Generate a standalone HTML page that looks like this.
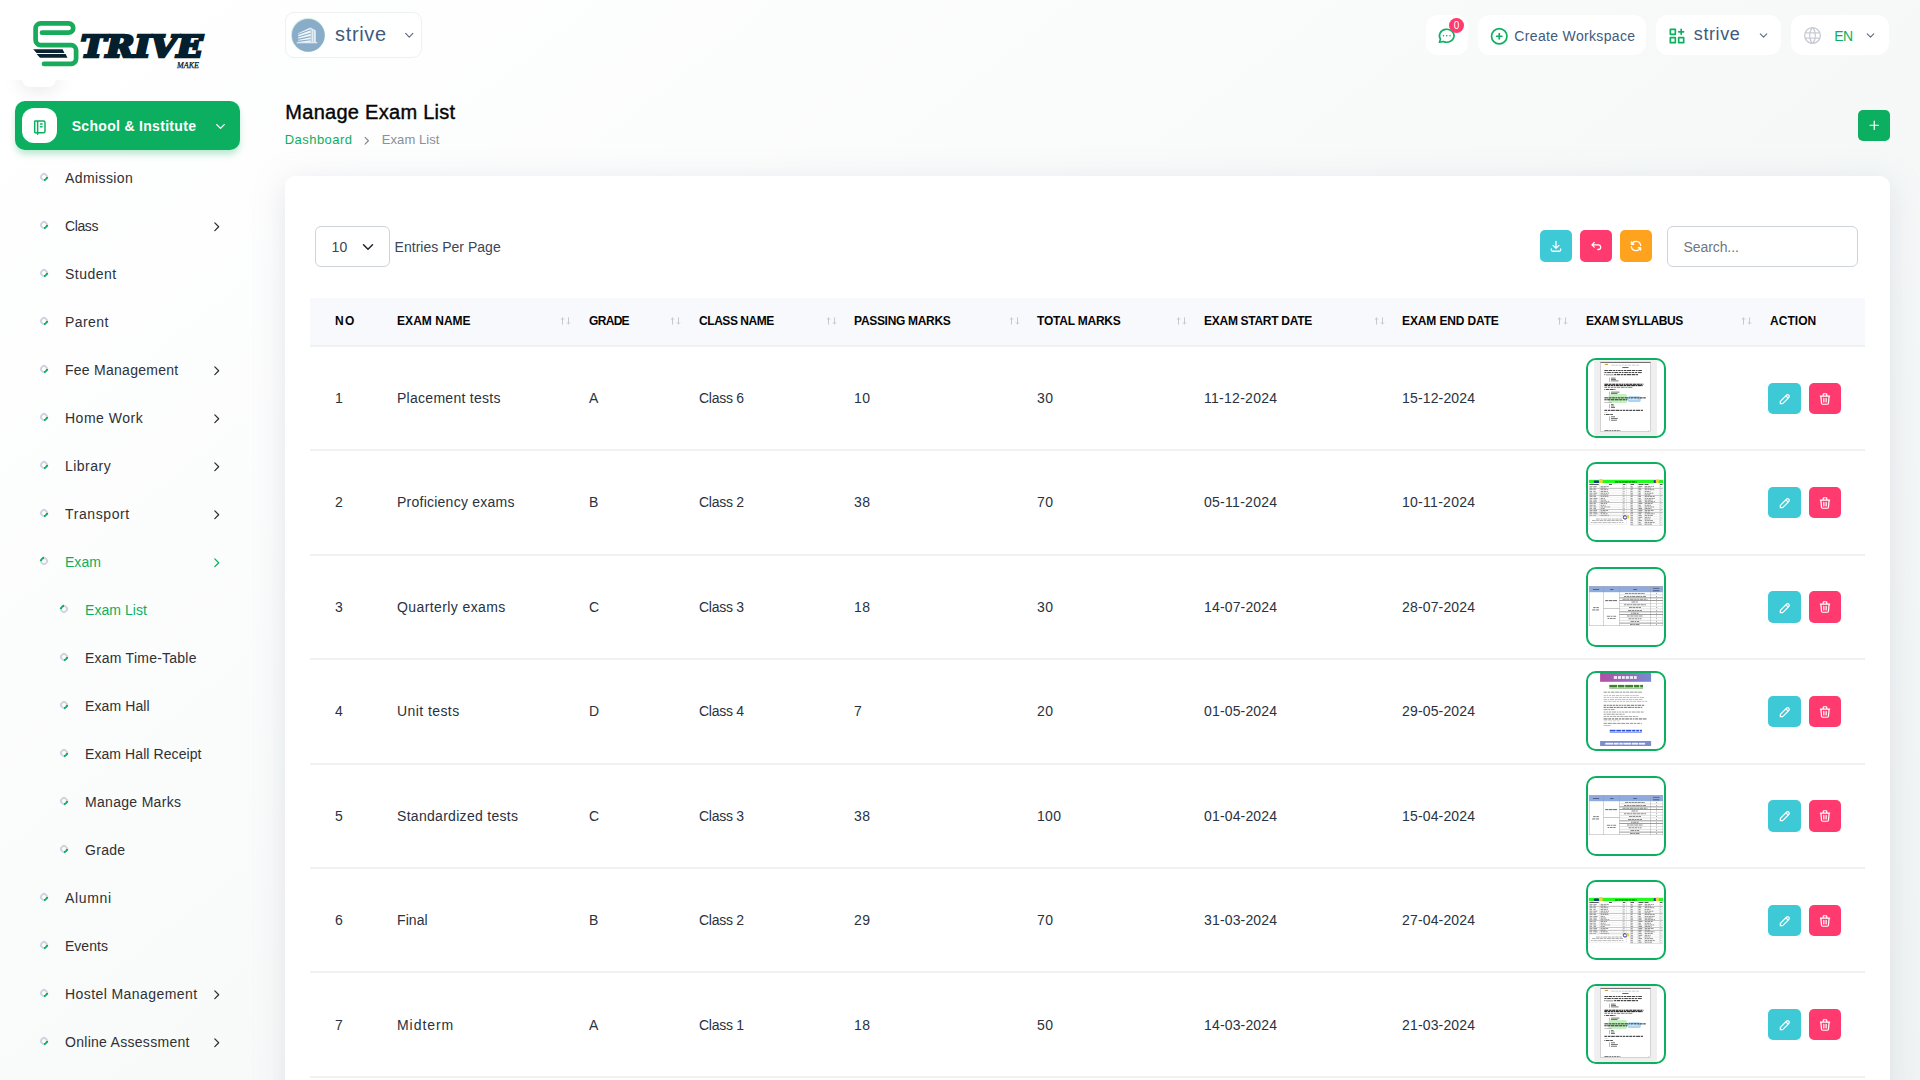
<!DOCTYPE html>
<html lang="en">
<head>
<meta charset="utf-8">
<title>Manage Exam List</title>
<style>
*{box-sizing:border-box;margin:0;padding:0}
html,body{width:1920px;height:1080px;overflow:hidden}
body{font-family:"Liberation Sans",sans-serif;background:linear-gradient(141.55deg,rgba(240,244,243,0) 3.46%,#f0f4f3 99.86%),#fff;color:#293240;position:relative;font-size:14px}
i{font-style:normal}
#sidebar,#top,#content{position:absolute;left:0;top:0;width:0;height:0}
.x{position:absolute;white-space:pre;line-height:20px}
.ic{position:absolute;line-height:0;display:block}
.ic svg{display:block}
#logo{position:absolute;left:0;top:0}
.ghost{position:absolute;left:22px;top:57px;width:34px;height:30.2px;border-radius:8px;background:#fff;box-shadow:0 3px 20px rgba(0,0,0,.1);clip-path:inset(23px -60px -60px -60px)}
#capt{position:absolute;left:15px;top:101px;width:225px;height:49px;border-radius:10px;background:#0caf60;box-shadow:0 5px 7px -1px rgba(12,175,96,.3)}
#capt .ib{position:absolute;left:7px;top:7px;width:35px;height:35px;border-radius:12px;background:#fff}
.b{position:absolute;width:8px;height:8px;border-radius:50%;border:2px solid #cfd4de;border-right-color:#0caf60;transform:rotate(45deg)}
.b.a{border-right-color:#cfd4de;border-left-color:#0caf60}
.pill{position:absolute;background:#fff;border-radius:12px;height:40px;top:15px}
.wpill{position:absolute;left:285px;top:12px;width:136.5px;height:45.5px;border:1px solid #eff0f0;border-radius:9px;background:rgba(255,255,255,.55)}
.av{position:absolute;left:291px;top:17.5px;width:34px;height:34px;line-height:0}
.bdg{position:absolute;width:15px;height:15px;border-radius:50%;background:#ff3a6e;color:#fff;font-size:10px;line-height:15px;text-align:center}
.ttl{color:#060606;-webkit-text-stroke:.4px #060606}
.addb{position:absolute;left:1858px;top:110px;width:32px;height:31px;border-radius:5px;background:#0caf60}
#card{position:absolute;left:285px;top:176px;width:1605px;height:960px;background:#fff;border-radius:10px;box-shadow:0 6px 30px rgba(182,186,203,.34)}
.sel{position:absolute;left:315px;top:226px;width:74.5px;height:40.5px;border:1px solid #ced4da;border-radius:6px;background:#fff}
.tbtn{position:absolute;top:230px;width:32px;height:32px;border-radius:5px}
.srch{position:absolute;left:1667px;top:226px;width:190.5px;height:40.5px;border:1px solid #ced4da;border-radius:6px;background:#fff}
.thead{position:absolute;left:310px;top:298px;width:1555px;height:49px;background:#f8f9fd;border-bottom:2px solid #f1f1f1}
.rb{position:absolute;left:310px;width:1555px;height:2px;background:#f1f1f1}
.thumb{position:absolute;left:1586px;width:80px;height:80px;border:2px solid #0caf60;border-radius:10px;overflow:hidden;background:#fff;line-height:0}
.abtn{position:absolute;height:31.5px;border-radius:5px}

</style>
</head>
<body>
<div id="sidebar">
<svg id="logo" width="260" height="100" viewBox="0 0 260 100">
<path d="M42 32.7H68.6a4.65 4.65 0 0 0 0-9.3H40.7a5.1 5.1 0 0 0-5.1 5.1V40a5.1 5.1 0 0 0 5.1 5.1H71a5.1 5.1 0 0 1 5.1 5.1v8.6a5.1 5.1 0 0 1-5.1 5.1H44" fill="none" stroke="#19ab5c" stroke-width="4.7" stroke-linecap="round" stroke-linejoin="round"/>
<path d="M33.2 49.3H62.6l1.9 3.6H36.6z M36.6 54.1H65.6l1.9 3.6H40z" fill="#0b2233"/>
<text x="80.7" y="57.3" font-family="'DejaVu Serif',serif" font-weight="bold" font-style="italic" font-size="30.4" fill="#04202f" stroke="#04202f" stroke-width="2.7" stroke-linejoin="miter" textLength="122.2" lengthAdjust="spacingAndGlyphs">TRIVE</text>
<text x="177" y="68" font-family="'Liberation Serif',serif" font-style="italic" font-size="8.2" stroke="#04202f" stroke-width=".25" fill="#04202f" textLength="22" lengthAdjust="spacingAndGlyphs">MAKE</text>
</svg>
<div class="ghost"></div>
<div id="capt"><div class="ib"></div></div>
<i class="ic" style="left:30.85px;top:117.75px"><svg width="17.7" height="17.7" viewBox="0 0 24 24" fill="none" stroke="#0caf60" stroke-width="2" stroke-linecap="round" stroke-linejoin="round"><path d="M6 4h11a2 2 0 0 1 2 2v12a2 2 0 0 1 -2 2h-11a1 1 0 0 1 -1 -1v-14a1 1 0 0 1 1 -1m3 0v18 M13 8l2 0 M13 12l2 0"/></svg></i>
<span class="x " style="left:71.70px;top:116.40px;font-size:14px;letter-spacing:0.310px;font-weight:bold;color:#fff;">School &amp; Institute</span>
<i class="ic" style="left:213.10px;top:118.50px"><svg width="15" height="15" viewBox="0 0 24 24" fill="none" stroke="#fff" stroke-width="2.2" stroke-linecap="round" stroke-linejoin="round"><path d="M6 9l6 6l6 -6"/></svg></i>
<i class="b" style="left:40px;top:172.7px"></i>
<span class="x " style="left:65.00px;top:168.15px;font-size:14px;letter-spacing:0.402px;color:#2e3135;">Admission</span>
<i class="b" style="left:40px;top:220.7px"></i>
<span class="x " style="left:65.00px;top:216.15px;font-size:14px;letter-spacing:-0.383px;color:#2e3135;">Class</span>
<i class="ic" style="left:209.25px;top:218.85px"><svg width="15.5" height="15.5" viewBox="0 0 24 24" fill="none" stroke="#2e3135" stroke-width="2" stroke-linecap="round" stroke-linejoin="round"><path d="M9 6l6 6l-6 6"/></svg></i>
<i class="b" style="left:40px;top:268.7px"></i>
<span class="x " style="left:65.00px;top:264.15px;font-size:14px;letter-spacing:0.500px;color:#2e3135;">Student</span>
<i class="b" style="left:40px;top:316.7px"></i>
<span class="x " style="left:65.00px;top:312.15px;font-size:14px;letter-spacing:0.425px;color:#2e3135;">Parent</span>
<i class="b" style="left:40px;top:364.7px"></i>
<span class="x " style="left:65.00px;top:360.15px;font-size:14px;letter-spacing:0.266px;color:#2e3135;">Fee Management</span>
<i class="ic" style="left:209.25px;top:362.85px"><svg width="15.5" height="15.5" viewBox="0 0 24 24" fill="none" stroke="#2e3135" stroke-width="2" stroke-linecap="round" stroke-linejoin="round"><path d="M9 6l6 6l-6 6"/></svg></i>
<i class="b" style="left:40px;top:412.7px"></i>
<span class="x " style="left:65.00px;top:408.15px;font-size:14px;letter-spacing:0.498px;color:#2e3135;">Home Work</span>
<i class="ic" style="left:209.25px;top:410.85px"><svg width="15.5" height="15.5" viewBox="0 0 24 24" fill="none" stroke="#2e3135" stroke-width="2" stroke-linecap="round" stroke-linejoin="round"><path d="M9 6l6 6l-6 6"/></svg></i>
<i class="b" style="left:40px;top:460.7px"></i>
<span class="x " style="left:65.00px;top:456.15px;font-size:14px;letter-spacing:0.477px;color:#2e3135;">Library</span>
<i class="ic" style="left:209.25px;top:458.85px"><svg width="15.5" height="15.5" viewBox="0 0 24 24" fill="none" stroke="#2e3135" stroke-width="2" stroke-linecap="round" stroke-linejoin="round"><path d="M9 6l6 6l-6 6"/></svg></i>
<i class="b" style="left:40px;top:508.7px"></i>
<span class="x " style="left:65.00px;top:504.15px;font-size:14px;letter-spacing:0.598px;color:#2e3135;">Transport</span>
<i class="ic" style="left:209.25px;top:506.85px"><svg width="15.5" height="15.5" viewBox="0 0 24 24" fill="none" stroke="#2e3135" stroke-width="2" stroke-linecap="round" stroke-linejoin="round"><path d="M9 6l6 6l-6 6"/></svg></i>
<i class="b a" style="left:40px;top:557.3px"></i>
<span class="x " style="left:65.00px;top:552.15px;font-size:14px;letter-spacing:0.021px;color:#0caf60;">Exam</span>
<i class="ic" style="left:209.25px;top:554.85px"><svg width="15.5" height="15.5" viewBox="0 0 24 24" fill="none" stroke="#0caf60" stroke-width="2" stroke-linecap="round" stroke-linejoin="round"><path d="M9 6l6 6l-6 6"/></svg></i>
<i class="b a" style="left:60px;top:605.3px"></i>
<span class="x " style="left:85.00px;top:600.15px;font-size:14px;letter-spacing:0.066px;color:#0caf60;">Exam List</span>
<i class="b" style="left:60px;top:652.7px"></i>
<span class="x " style="left:85.00px;top:648.15px;font-size:14px;letter-spacing:0.240px;color:#2e3135;">Exam Time-Table</span>
<i class="b" style="left:60px;top:700.7px"></i>
<span class="x " style="left:85.00px;top:696.15px;font-size:14px;letter-spacing:0.107px;color:#2e3135;">Exam Hall</span>
<i class="b" style="left:60px;top:748.7px"></i>
<span class="x " style="left:85.00px;top:744.15px;font-size:14px;letter-spacing:0.081px;color:#2e3135;">Exam Hall Receipt</span>
<i class="b" style="left:60px;top:796.7px"></i>
<span class="x " style="left:85.00px;top:792.15px;font-size:14px;letter-spacing:0.307px;color:#2e3135;">Manage Marks</span>
<i class="b" style="left:60px;top:844.7px"></i>
<span class="x " style="left:85.00px;top:840.15px;font-size:14px;letter-spacing:0.297px;color:#2e3135;">Grade</span>
<i class="b" style="left:40px;top:892.7px"></i>
<span class="x " style="left:65.00px;top:888.15px;font-size:14px;letter-spacing:0.653px;color:#2e3135;">Alumni</span>
<i class="b" style="left:40px;top:940.7px"></i>
<span class="x " style="left:65.00px;top:936.15px;font-size:14px;letter-spacing:0.016px;color:#2e3135;">Events</span>
<i class="b" style="left:40px;top:988.7px"></i>
<span class="x " style="left:65.00px;top:984.15px;font-size:14px;letter-spacing:0.422px;color:#2e3135;">Hostel Management</span>
<i class="ic" style="left:209.25px;top:986.85px"><svg width="15.5" height="15.5" viewBox="0 0 24 24" fill="none" stroke="#2e3135" stroke-width="2" stroke-linecap="round" stroke-linejoin="round"><path d="M9 6l6 6l-6 6"/></svg></i>
<i class="b" style="left:40px;top:1036.7px"></i>
<span class="x " style="left:65.00px;top:1032.15px;font-size:14px;letter-spacing:0.287px;color:#2e3135;">Online Assessment</span>
<i class="ic" style="left:209.25px;top:1034.85px"><svg width="15.5" height="15.5" viewBox="0 0 24 24" fill="none" stroke="#2e3135" stroke-width="2" stroke-linecap="round" stroke-linejoin="round"><path d="M9 6l6 6l-6 6"/></svg></i>
</div>
<div id="top">
<div class="wpill"></div><div class="av"><svg width="34" height="34" viewBox="0 0 34 34"><circle cx="17" cy="17" r="17" fill="#cfeedd"/><circle cx="17.3" cy="17.3" r="16.4" fill="#89adc9"/>
<path d="M7.2 15.2L19.5 9.6V24.3H7.2z" fill="#fff" opacity=".9"/><path d="M19.5 9.6L24.8 12.6V24.3H19.5z" fill="#e6eef5"/>
<path d="M7 16.6L19.5 11.8M7 19L19.5 15.2M7 21.4L19.5 18.6M7 23.4L19.5 21.8" stroke="#89adc9" stroke-width="1.1"/>
<path d="M20.6 11.5V24M22.6 12.3V24" stroke="#a9c3d8" stroke-width=".7"/><rect x="5.8" y="24" width="20.4" height="1.3" fill="#dfe9f1"/></svg></div>
<span class="x " style="left:335.00px;top:23.77px;font-size:20px;letter-spacing:0.662px;color:#3f5a7d;">strive</span>
<i class="ic" style="left:401.65px;top:28.05px"><svg width="14.5" height="14.5" viewBox="0 0 24 24" fill="none" stroke="#5a6b82" stroke-width="1.9" stroke-linecap="round" stroke-linejoin="round"><path d="M6 9l6 6l6 -6"/></svg></i>
<div class="pill" style="left:1426px;width:42px"></div>
<i class="ic" style="left:1437.45px;top:26.25px"><svg width="19.5" height="19.5" viewBox="0 0 24 24" fill="none" stroke="#0caf60" stroke-width="2" stroke-linecap="round" stroke-linejoin="round"><path d="M3 20l1.3 -3.9a9 8 0 1 1 3.4 2.9l-4.7 1 M12 12l0 .01 M8 12l0 .01 M16 12l0 .01"/></svg></i>
<span class="bdg" style="left:1449px;top:17.8px">0</span>
<div class="pill" style="left:1478px;width:168.2px"></div>
<i class="ic" style="left:1489.15px;top:25.65px"><svg width="20.5" height="20.5" viewBox="0 0 24 24" fill="none" stroke="#0caf60" stroke-width="2" stroke-linecap="round" stroke-linejoin="round"><path d="M3 12a9 9 0 1 0 18 0a9 9 0 0 0 -18 0 M9 12h6 M12 9v6"/></svg></i>
<span class="x " style="left:1514.30px;top:26.15px;font-size:14px;letter-spacing:0.340px;color:#3f5a7d;">Create Workspace</span>
<div class="pill" style="left:1656px;width:125px"></div>
<i class="ic" style="left:1667.30px;top:26.00px"><svg width="20" height="20" viewBox="0 0 24 24" fill="none" stroke="#0caf60" stroke-width="2" stroke-linecap="round" stroke-linejoin="round"><path d="M4 4h6v6h-6z M4 14h6v6h-6z M14 14h6v6h-6z M14 7h6 M17 4v6"/></svg></i>
<span class="x " style="left:1693.80px;top:24.16px;font-size:18px;letter-spacing:0.597px;color:#3f5a7d;">strive</span>
<i class="ic" style="left:1756.60px;top:28.80px"><svg width="13" height="13" viewBox="0 0 24 24" fill="none" stroke="#5a6b82" stroke-width="2" stroke-linecap="round" stroke-linejoin="round"><path d="M6 9l6 6l6 -6"/></svg></i>
<div class="pill" style="left:1791px;width:98.3px"></div>
<i class="ic" style="left:1801.70px;top:25.40px"><svg width="21" height="21" viewBox="0 0 24 24" fill="none" stroke="#c8cbd4" stroke-width="1.5" stroke-linecap="round" stroke-linejoin="round"><path d="M3 12a9 9 0 1 0 18 0a9 9 0 0 0 -18 0 M3.6 9h16.8 M3.6 15h16.8 M11.5 3a17 17 0 0 0 0 18 M12.5 3a17 17 0 0 1 0 18"/></svg></i>
<span class="x " style="left:1834.30px;top:25.55px;font-size:14px;letter-spacing:-0.525px;color:#0caf60;">EN</span>
<i class="ic" style="left:1864.40px;top:28.80px"><svg width="13" height="13" viewBox="0 0 24 24" fill="none" stroke="#5a6b82" stroke-width="2" stroke-linecap="round" stroke-linejoin="round"><path d="M6 9l6 6l6 -6"/></svg></i>
<span class="x ttl" style="left:285.30px;top:101.87px;font-size:20px;letter-spacing:0.279px;">Manage Exam List</span>
<span class="x " style="left:284.80px;top:129.90px;font-size:13px;letter-spacing:0.436px;color:#0caf60;">Dashboard</span>
<i class="ic" style="left:360.15px;top:133.55px"><svg width="13.5" height="13.5" viewBox="0 0 24 24" fill="none" stroke="#7b828c" stroke-width="1.9" stroke-linecap="round" stroke-linejoin="round"><path d="M9 6l6 6l-6 6"/></svg></i>
<span class="x " style="left:381.80px;top:129.90px;font-size:13px;letter-spacing:0.061px;color:#8a909a;">Exam List</span>
<div class="addb"></div>
<i class="ic" style="left:1866.75px;top:118.25px"><svg width="14.5" height="14.5" viewBox="0 0 24 24" fill="none" stroke="#fff" stroke-width="2" stroke-linecap="round" stroke-linejoin="round"><path d="M12 5v14 M5 12h14"/></svg></i>
</div>
<div id="content">
<div id="card"></div>
<div class="sel"></div>
<span class="x " style="left:331.40px;top:237.15px;font-size:14px;letter-spacing:0.438px;color:#3b4656;">10</span>
<i class="ic" style="left:359.20px;top:237.60px"><svg width="18" height="18" viewBox="0 0 24 24" fill="none" stroke="#1d2630" stroke-width="2" stroke-linecap="round" stroke-linejoin="round"><path d="M6 9l6 6l6 -6"/></svg></i>
<span class="x " style="left:394.60px;top:237.15px;font-size:14px;letter-spacing:0.017px;color:#3b4656;">Entries Per Page</span>
<div class="tbtn" style="left:1540px;background:#3ec9d6"></div>
<i class="ic" style="left:1549.00px;top:239.20px"><svg width="14" height="14" viewBox="0 0 24 24" fill="none" stroke="#fff" stroke-width="2.2" stroke-linecap="round" stroke-linejoin="round"><path d="M4 17v2a2 2 0 0 0 2 2h12a2 2 0 0 0 2 -2v-2 M7 11l5 5l5 -5 M12 4v12"/></svg></i>
<div class="tbtn" style="left:1580px;background:#ff3a6e"></div>
<i class="ic" style="left:1589.00px;top:239.20px"><svg width="14" height="14" viewBox="0 0 24 24" fill="none" stroke="#fff" stroke-width="2.2" stroke-linecap="round" stroke-linejoin="round"><path d="M9 14l-4 -4l4 -4 M5 10h11a4 4 0 1 1 0 8h-1"/></svg></i>
<div class="tbtn" style="left:1620px;background:#ffa21d"></div>
<i class="ic" style="left:1629.00px;top:239.20px"><svg width="14" height="14" viewBox="0 0 24 24" fill="none" stroke="#fff" stroke-width="2.2" stroke-linecap="round" stroke-linejoin="round"><path d="M20 11a8.1 8.1 0 0 0 -15.5 -2m-.5 -4v4h4 M4 13a8.1 8.1 0 0 0 15.5 2m.5 4v-4h-4"/></svg></i>
<div class="srch"></div>
<span class="x " style="left:1683.50px;top:237.15px;font-size:14px;letter-spacing:-0.082px;color:#6f7782;">Search...</span>
<div class="thead"></div>
<span class="x " style="left:335.10px;top:310.84px;font-size:12px;letter-spacing:1.312px;font-weight:bold;color:#060606;">NO</span>
<span class="x " style="left:397.10px;top:310.84px;font-size:12px;letter-spacing:0.021px;font-weight:bold;color:#060606;">EXAM NAME</span>
<i class="ic" style="left:560px;top:316.5px"><svg width="11" height="8" viewBox="0 0 11 8" fill="none" stroke="#c6c8cd" stroke-width="1" stroke-linecap="round" stroke-linejoin="round"><path d="M2.5 7.2V1M1.2 2.3L2.5 1L3.8 2.3M8.5 .8V7M7.2 5.7L8.5 7L9.8 5.7"/></svg></i>
<span class="x " style="left:589.10px;top:310.84px;font-size:12px;letter-spacing:-0.711px;font-weight:bold;color:#060606;">GRADE</span>
<i class="ic" style="left:670px;top:316.5px"><svg width="11" height="8" viewBox="0 0 11 8" fill="none" stroke="#c6c8cd" stroke-width="1" stroke-linecap="round" stroke-linejoin="round"><path d="M2.5 7.2V1M1.2 2.3L2.5 1L3.8 2.3M8.5 .8V7M7.2 5.7L8.5 7L9.8 5.7"/></svg></i>
<span class="x " style="left:699.10px;top:310.84px;font-size:12px;letter-spacing:-0.469px;font-weight:bold;color:#060606;">CLASS NAME</span>
<i class="ic" style="left:826px;top:316.5px"><svg width="11" height="8" viewBox="0 0 11 8" fill="none" stroke="#c6c8cd" stroke-width="1" stroke-linecap="round" stroke-linejoin="round"><path d="M2.5 7.2V1M1.2 2.3L2.5 1L3.8 2.3M8.5 .8V7M7.2 5.7L8.5 7L9.8 5.7"/></svg></i>
<span class="x " style="left:854.10px;top:310.84px;font-size:12px;letter-spacing:-0.315px;font-weight:bold;color:#060606;">PASSING MARKS</span>
<i class="ic" style="left:1009px;top:316.5px"><svg width="11" height="8" viewBox="0 0 11 8" fill="none" stroke="#c6c8cd" stroke-width="1" stroke-linecap="round" stroke-linejoin="round"><path d="M2.5 7.2V1M1.2 2.3L2.5 1L3.8 2.3M8.5 .8V7M7.2 5.7L8.5 7L9.8 5.7"/></svg></i>
<span class="x " style="left:1037.10px;top:310.84px;font-size:12px;letter-spacing:-0.228px;font-weight:bold;color:#060606;">TOTAL MARKS</span>
<i class="ic" style="left:1176px;top:316.5px"><svg width="11" height="8" viewBox="0 0 11 8" fill="none" stroke="#c6c8cd" stroke-width="1" stroke-linecap="round" stroke-linejoin="round"><path d="M2.5 7.2V1M1.2 2.3L2.5 1L3.8 2.3M8.5 .8V7M7.2 5.7L8.5 7L9.8 5.7"/></svg></i>
<span class="x " style="left:1204.10px;top:310.84px;font-size:12px;letter-spacing:-0.295px;font-weight:bold;color:#060606;">EXAM START DATE</span>
<i class="ic" style="left:1374px;top:316.5px"><svg width="11" height="8" viewBox="0 0 11 8" fill="none" stroke="#c6c8cd" stroke-width="1" stroke-linecap="round" stroke-linejoin="round"><path d="M2.5 7.2V1M1.2 2.3L2.5 1L3.8 2.3M8.5 .8V7M7.2 5.7L8.5 7L9.8 5.7"/></svg></i>
<span class="x " style="left:1402.10px;top:310.84px;font-size:12px;letter-spacing:-0.142px;font-weight:bold;color:#060606;">EXAM END DATE</span>
<i class="ic" style="left:1557px;top:316.5px"><svg width="11" height="8" viewBox="0 0 11 8" fill="none" stroke="#c6c8cd" stroke-width="1" stroke-linecap="round" stroke-linejoin="round"><path d="M2.5 7.2V1M1.2 2.3L2.5 1L3.8 2.3M8.5 .8V7M7.2 5.7L8.5 7L9.8 5.7"/></svg></i>
<span class="x " style="left:1586.10px;top:310.84px;font-size:12px;letter-spacing:-0.464px;font-weight:bold;color:#060606;">EXAM SYLLABUS</span>
<i class="ic" style="left:1741px;top:316.5px"><svg width="11" height="8" viewBox="0 0 11 8" fill="none" stroke="#c6c8cd" stroke-width="1" stroke-linecap="round" stroke-linejoin="round"><path d="M2.5 7.2V1M1.2 2.3L2.5 1L3.8 2.3M8.5 .8V7M7.2 5.7L8.5 7L9.8 5.7"/></svg></i>
<span class="x " style="left:1770.10px;top:310.84px;font-size:12px;letter-spacing:0.031px;font-weight:bold;color:#060606;">ACTION</span>
<div class="rb" style="top:449.40px"></div>
<span class="x " style="left:335.00px;top:388.15px;font-size:14px;letter-spacing:0.219px;color:#293240;">1</span>
<span class="x " style="left:397.00px;top:388.15px;font-size:14px;letter-spacing:0.280px;color:#293240;">Placement tests</span>
<span class="x " style="left:589.00px;top:388.15px;font-size:14px;letter-spacing:-0.484px;color:#293240;">A</span>
<span class="x " style="left:699.00px;top:388.15px;font-size:14px;letter-spacing:-0.260px;color:#293240;">Class 6</span>
<span class="x " style="left:854.00px;top:388.15px;font-size:14px;letter-spacing:0.438px;color:#293240;">10</span>
<span class="x " style="left:1037.00px;top:388.15px;font-size:14px;letter-spacing:0.438px;color:#293240;">30</span>
<span class="x " style="left:1204.00px;top:388.15px;font-size:14px;letter-spacing:0.276px;color:#293240;">11-12-2024</span>
<span class="x " style="left:1402.00px;top:388.15px;font-size:14px;letter-spacing:0.160px;color:#293240;">15-12-2024</span>
<div class="thumb" style="top:358.00px"><svg width="76" height="76" viewBox="0 0 76 76"><rect x="6.2" y="0" width="62.8" height="76" fill="#efefef"/><rect x="12.6" y="2.1" width="49.9" height="69.4" fill="#fff" stroke="#b0b0b0" stroke-width=".5"/><rect x="12.6" y="2.0" width="49.9" height="0.8" fill="#555"/><rect x="16.8" y="3.9" width="3.2" height="1.1" fill="#e8952c"/><rect x="23.3" y="4.7" width="3.3" height="0.9" fill="#c6c6c6"/><rect x="27.3" y="4.7" width="2.59" height="0.9" fill="#c6c6c6"/><rect x="30.59" y="4.7" width="2.5" height="0.9" fill="#c6c6c6"/><rect x="33.79" y="4.7" width="1.94" height="0.9" fill="#c6c6c6"/><rect x="36.43" y="4.7" width="2.53" height="0.9" fill="#c6c6c6"/><rect x="39.66" y="4.7" width="3.48" height="0.9" fill="#c6c6c6"/><rect x="43.84" y="4.7" width="3.75" height="0.9" fill="#c6c6c6"/><rect x="48.29" y="4.7" width="2.81" height="0.9" fill="#c6c6c6"/><rect x="34.3" y="7" width="6.2" height="0.9" fill="#555"/><rect x="16.4" y="10" width="3.53" height="0.95" fill="#3a3a3a"/><rect x="20.63" y="10" width="3.69" height="0.95" fill="#3a3a3a"/><rect x="25.03" y="10" width="2.07" height="0.95" fill="#3a3a3a"/><rect x="27.8" y="10" width="1.68" height="0.95" fill="#3a3a3a"/><rect x="30.17" y="10" width="2.44" height="0.95" fill="#3a3a3a"/><rect x="33.31" y="10" width="1.78" height="0.95" fill="#3a3a3a"/><rect x="35.8" y="10" width="2.59" height="0.95" fill="#3a3a3a"/><rect x="39.09" y="10" width="4.18" height="0.95" fill="#3a3a3a"/><rect x="43.97" y="10" width="3.02" height="0.95" fill="#3a3a3a"/><rect x="47.69" y="10" width="1.87" height="0.95" fill="#3a3a3a"/><rect x="50.26" y="10" width="3.67" height="0.95" fill="#3a3a3a"/><rect x="16.4" y="12.1" width="2.1" height="0.95" fill="#3a3a3a"/><rect x="19.2" y="12.1" width="3.67" height="0.95" fill="#3a3a3a"/><rect x="23.57" y="12.1" width="2.05" height="0.95" fill="#3a3a3a"/><rect x="26.32" y="12.1" width="3.79" height="0.95" fill="#3a3a3a"/><rect x="30.81" y="12.1" width="2.38" height="0.95" fill="#3a3a3a"/><rect x="33.88" y="12.1" width="1.65" height="0.95" fill="#3a3a3a"/><rect x="36.24" y="12.1" width="3.68" height="0.95" fill="#3a3a3a"/><rect x="40.62" y="12.1" width="2.28" height="0.95" fill="#3a3a3a"/><rect x="43.6" y="12.1" width="2.45" height="0.95" fill="#3a3a3a"/><rect x="46.75" y="12.1" width="2.32" height="0.95" fill="#3a3a3a"/><rect x="49.77" y="12.1" width="3.97" height="0.95" fill="#3a3a3a"/><rect x="16.4" y="14.2" width="0.9" height="0.9" fill="#333"/><rect x="18" y="14.6" width="7.5" height="0.6" fill="#444"/><rect x="26.2" y="14.1" width="1.83" height="1.1" fill="#333"/><rect x="28.73" y="14.1" width="3.53" height="1.1" fill="#333"/><rect x="32.97" y="14.1" width="1.91" height="1.1" fill="#333"/><rect x="35.58" y="14.1" width="2.76" height="1.1" fill="#333"/><rect x="39.04" y="14.1" width="3.9" height="1.1" fill="#333"/><rect x="43.64" y="14.1" width="3.77" height="1.1" fill="#333"/><rect x="48.11" y="14.1" width="1.94" height="1.1" fill="#333"/><rect x="21.3" y="17.6" width="0.45" height="4.2" fill="#666"/><rect x="23" y="17.7" width="4.5" height="0.8" fill="#555"/><rect x="23" y="19.1" width="5" height="0.8" fill="#555"/><rect x="23" y="20.5" width="7.5" height="0.8" fill="#555"/><rect x="16.4" y="23.7" width="4.04" height="1.15" fill="#2b2b2b"/><rect x="20.99" y="23.7" width="2.58" height="1.15" fill="#2b2b2b"/><rect x="24.12" y="23.7" width="3.26" height="1.15" fill="#2b2b2b"/><rect x="27.92" y="23.7" width="2.66" height="1.15" fill="#2b2b2b"/><rect x="31.14" y="23.7" width="1.73" height="1.15" fill="#2b2b2b"/><rect x="33.41" y="23.7" width="1.75" height="1.15" fill="#2b2b2b"/><rect x="35.71" y="23.7" width="1.72" height="1.15" fill="#2b2b2b"/><rect x="37.98" y="23.7" width="2.74" height="1.15" fill="#2b2b2b"/><rect x="41.27" y="23.7" width="2.89" height="1.15" fill="#2b2b2b"/><rect x="44.7" y="23.7" width="3.83" height="1.15" fill="#2b2b2b"/><rect x="49.08" y="23.7" width="2.7" height="1.15" fill="#2b2b2b"/><rect x="52.33" y="23.7" width="1.84" height="1.15" fill="#2b2b2b"/><rect x="54.71" y="23.7" width="0.69" height="1.15" fill="#2b2b2b"/><rect x="16.4" y="25.0" width="2.86" height="1.15" fill="#2b2b2b"/><rect x="19.81" y="25.0" width="2.48" height="1.15" fill="#2b2b2b"/><rect x="22.85" y="25.0" width="2.08" height="1.15" fill="#2b2b2b"/><rect x="25.47" y="25.0" width="1.97" height="1.15" fill="#2b2b2b"/><rect x="27.99" y="25.0" width="2.93" height="1.15" fill="#2b2b2b"/><rect x="31.47" y="25.0" width="3.51" height="1.15" fill="#2b2b2b"/><rect x="35.53" y="25.0" width="2.59" height="1.15" fill="#2b2b2b"/><rect x="38.67" y="25.0" width="3.98" height="1.15" fill="#2b2b2b"/><rect x="43.2" y="25.0" width="3.7" height="1.15" fill="#2b2b2b"/><rect x="47.45" y="25.0" width="2.0" height="1.15" fill="#2b2b2b"/><rect x="50.0" y="25.0" width="3.74" height="1.15" fill="#2b2b2b"/><rect x="54.3" y="25.0" width="0.6" height="1.15" fill="#2b2b2b"/><rect x="16.4" y="26.9" width="2.74" height="0.8" fill="#6a6a6a"/><rect x="19.84" y="26.9" width="2.48" height="0.8" fill="#6a6a6a"/><rect x="23.02" y="26.9" width="2.34" height="0.8" fill="#6a6a6a"/><rect x="26.05" y="26.9" width="2.33" height="0.8" fill="#6a6a6a"/><rect x="29.08" y="26.9" width="3.07" height="0.8" fill="#6a6a6a"/><rect x="32.85" y="26.9" width="3.79" height="0.8" fill="#6a6a6a"/><rect x="37.34" y="26.9" width="2.24" height="0.8" fill="#6a6a6a"/><rect x="40.28" y="26.9" width="4.03" height="0.8" fill="#6a6a6a"/><rect x="16.4" y="29.1" width="0.9" height="0.9" fill="#333"/><rect x="18" y="29.1" width="2.95" height="0.9" fill="#3a3a3a"/><rect x="21.65" y="29.1" width="4.01" height="0.9" fill="#3a3a3a"/><rect x="26.35" y="29.1" width="1.05" height="0.9" fill="#3a3a3a"/><rect x="21.3" y="31.6" width="0.45" height="4.2" fill="#666"/><rect x="23" y="31.7" width="8.5" height="0.8" fill="#555"/><rect x="23" y="33.1" width="6.5" height="0.8" fill="#555"/><rect x="23" y="34.6" width="9" height="0.8" fill="#555"/><rect x="20.5" y="34.1" width="18.5" height="8.8" fill="#c3f0bf" rx="1.6"/><rect x="39.8" y="36.2" width="13" height="5.9" fill="#abd5f5" rx="1.6"/><rect x="16.4" y="37.3" width="3.54" height="1.1" fill="#383838"/><rect x="20.49" y="37.3" width="3.04" height="1.1" fill="#383838"/><rect x="24.09" y="37.3" width="2.7" height="1.1" fill="#383838"/><rect x="27.34" y="37.3" width="1.84" height="1.1" fill="#383838"/><rect x="29.73" y="37.3" width="2.77" height="1.1" fill="#383838"/><rect x="33.05" y="37.3" width="2.81" height="1.1" fill="#383838"/><rect x="36.41" y="37.3" width="3.71" height="1.1" fill="#383838"/><rect x="40.68" y="37.3" width="1.65" height="1.1" fill="#383838"/><rect x="42.87" y="37.3" width="2.14" height="1.1" fill="#383838"/><rect x="45.56" y="37.3" width="3.08" height="1.1" fill="#383838"/><rect x="49.19" y="37.3" width="2.14" height="1.1" fill="#383838"/><rect x="51.89" y="37.3" width="2.76" height="1.1" fill="#383838"/><rect x="55.2" y="37.3" width="2.55" height="1.1" fill="#383838"/><rect x="16.4" y="39.2" width="2.22" height="1.1" fill="#383838"/><rect x="19.17" y="39.2" width="2.88" height="1.1" fill="#383838"/><rect x="22.59" y="39.2" width="3.83" height="1.1" fill="#383838"/><rect x="26.97" y="39.2" width="3.63" height="1.1" fill="#383838"/><rect x="31.15" y="39.2" width="2.88" height="1.1" fill="#383838"/><rect x="34.59" y="39.2" width="2.36" height="1.1" fill="#383838"/><rect x="37.5" y="39.2" width="1.9" height="1.1" fill="#383838"/><rect x="41" y="38.7" width="1.99" height="0.9" fill="#eaf4fc"/><rect x="43.69" y="38.7" width="3.76" height="0.9" fill="#eaf4fc"/><rect x="48.15" y="38.7" width="1.76" height="0.9" fill="#eaf4fc"/><rect x="16.4" y="42.2" width="7.3" height="0.6" fill="#999"/><rect x="21.3" y="44.1" width="0.45" height="4.2" fill="#666"/><rect x="23" y="44.2" width="2.5" height="0.8" fill="#555"/><rect x="23" y="45.6" width="3.4" height="0.8" fill="#555"/><rect x="23" y="47" width="4" height="0.8" fill="#555"/><rect x="16.4" y="49.8" width="2.83" height="1.05" fill="#303030"/><rect x="19.93" y="49.8" width="2.53" height="1.05" fill="#303030"/><rect x="23.16" y="49.8" width="3.66" height="1.05" fill="#303030"/><rect x="27.52" y="49.8" width="3.99" height="1.05" fill="#303030"/><rect x="32.21" y="49.8" width="1.89" height="1.05" fill="#303030"/><rect x="34.81" y="49.8" width="2.3" height="1.05" fill="#303030"/><rect x="37.81" y="49.8" width="2.77" height="1.05" fill="#303030"/><rect x="41.28" y="49.8" width="3.0" height="1.05" fill="#303030"/><rect x="44.99" y="49.8" width="2.43" height="1.05" fill="#303030"/><rect x="48.12" y="49.8" width="4.17" height="1.05" fill="#303030"/><rect x="52.99" y="49.8" width="2.01" height="1.05" fill="#303030"/><rect x="16.4" y="52.1" width="3.3" height="0.45" fill="#b5b5b5"/><rect x="16.4" y="54.1" width="0.9" height="0.9" fill="#333"/><rect x="18" y="54.1" width="3.53" height="0.9" fill="#3a3a3a"/><rect x="22.23" y="54.1" width="2.63" height="0.9" fill="#3a3a3a"/><rect x="21.3" y="56.3" width="0.45" height="4.6" fill="#666"/><rect x="23" y="56.4" width="4" height="0.8" fill="#555"/><rect x="23" y="58.1" width="6.8" height="0.8" fill="#555"/><rect x="23" y="59.8" width="6" height="0.8" fill="#555"/><rect x="16.4" y="70.1" width="4.19" height="0.8" fill="#5a5a5a"/><rect x="21.29" y="70.1" width="1.74" height="0.8" fill="#5a5a5a"/><rect x="23.73" y="70.1" width="1.74" height="0.8" fill="#5a5a5a"/><rect x="26.17" y="70.1" width="1.8" height="0.8" fill="#5a5a5a"/><rect x="28.67" y="70.1" width="2.03" height="0.8" fill="#5a5a5a"/><rect x="31.4" y="70.1" width="0.9" height="0.8" fill="#5a5a5a"/><rect x="60.5" y="70.2" width="0.6" height="0.6" fill="#999"/></svg></div>
<div class="abtn" style="left:1768px;top:382.50px;width:33px;background:#3ec9d6"></div>
<i class="ic" style="left:1777.65px;top:391.80px"><svg width="14" height="14" viewBox="0 0 24 24" fill="none" stroke="#fff" stroke-width="2.1" stroke-linecap="round" stroke-linejoin="round"><path d="M4 20h4l10.5 -10.5a1.5 1.5 0 0 0 -4 -4l-10.5 10.5v4 M13.5 6.5l4 4"/></svg></i>
<div class="abtn" style="left:1809px;top:382.50px;width:32px;background:#ff3a6e"></div>
<i class="ic" style="left:1818.00px;top:391.50px"><svg width="14" height="14" viewBox="0 0 24 24" fill="none" stroke="#fff" stroke-width="2.1" stroke-linecap="round" stroke-linejoin="round"><path d="M4 7l16 0 M10 11l0 6 M14 11l0 6 M5 7l1 12a2 2 0 0 0 2 2h8a2 2 0 0 0 2 -2l1 -12 M9 7v-3a1 1 0 0 1 1 -1h4a1 1 0 0 1 1 1v3"/></svg></i>
<div class="rb" style="top:553.80px"></div>
<span class="x " style="left:335.00px;top:492.15px;font-size:14px;letter-spacing:0.219px;color:#293240;">2</span>
<span class="x " style="left:397.00px;top:492.15px;font-size:14px;letter-spacing:0.242px;color:#293240;">Proficiency exams</span>
<span class="x " style="left:589.00px;top:492.15px;font-size:14px;letter-spacing:-0.297px;color:#293240;">B</span>
<span class="x " style="left:699.00px;top:492.15px;font-size:14px;letter-spacing:-0.260px;color:#293240;">Class 2</span>
<span class="x " style="left:854.00px;top:492.15px;font-size:14px;letter-spacing:0.438px;color:#293240;">38</span>
<span class="x " style="left:1037.00px;top:492.15px;font-size:14px;letter-spacing:0.438px;color:#293240;">70</span>
<span class="x " style="left:1204.00px;top:492.15px;font-size:14px;letter-spacing:0.276px;color:#293240;">05-11-2024</span>
<span class="x " style="left:1402.00px;top:492.15px;font-size:14px;letter-spacing:0.276px;color:#293240;">10-11-2024</span>
<div class="thumb" style="top:462.40px"><svg width="76" height="76" viewBox="0 0 76 76"><rect x="0.9" y="15.8" width="74.2" height="3.3" fill="#21fb21"/><rect x="5.8" y="16.4" width="5.3" height="2.5" fill="#1c2f8f" rx="1"/><rect x="11.1" y="15" width="3.7" height="3.9" fill="#f4d23c" rx="1"/><rect x="65.7" y="15.9" width="2.6" height="3" fill="#2a3c9a" rx="1"/><rect x="67.8" y="15.4" width="3.2" height="3.5" fill="#f4d23c" rx="1"/><rect x="27" y="17.3" width="3.08" height="1.3" fill="#0f7a14"/><rect x="30.58" y="17.3" width="2.27" height="1.3" fill="#0f7a14"/><rect x="33.35" y="17.3" width="2.44" height="1.3" fill="#0f7a14"/><rect x="36.29" y="17.3" width="4.13" height="1.3" fill="#0f7a14"/><rect x="40.92" y="17.3" width="2.41" height="1.3" fill="#0f7a14"/><rect x="43.83" y="17.3" width="3.66" height="1.3" fill="#0f7a14"/><rect x="47.99" y="17.3" width="0.61" height="1.3" fill="#0f7a14"/><rect x="1.2" y="20" width="9.6" height="0.9" fill="#4a4a4a"/><rect x="21" y="20" width="3" height="0.9" fill="#4a4a4a"/><rect x="35" y="20" width="2.4" height="0.9" fill="#4a4a4a"/><rect x="42.5" y="20" width="3.5" height="0.9" fill="#4a4a4a"/><rect x="50.5" y="20" width="5" height="0.9" fill="#4a4a4a"/><rect x="56.5" y="20" width="4" height="0.9" fill="#4a4a4a"/><rect x="72" y="20" width="2.5" height="0.9" fill="#4a4a4a"/><rect x="1" y="23.0" width="74" height="0.3" fill="#dcdcdc"/><rect x="1" y="24.72" width="74" height="0.3" fill="#dcdcdc"/><rect x="1" y="26.44" width="74" height="0.3" fill="#dcdcdc"/><rect x="1" y="28.16" width="74" height="0.3" fill="#dcdcdc"/><rect x="1" y="29.88" width="74" height="0.3" fill="#dcdcdc"/><rect x="1" y="31.6" width="74" height="0.3" fill="#dcdcdc"/><rect x="1" y="33.32" width="74" height="0.3" fill="#dcdcdc"/><rect x="1" y="35.04" width="74" height="0.3" fill="#dcdcdc"/><rect x="1" y="36.76" width="74" height="0.3" fill="#dcdcdc"/><rect x="1" y="38.48" width="74" height="0.3" fill="#dcdcdc"/><rect x="1" y="40.2" width="74" height="0.3" fill="#dcdcdc"/><rect x="1" y="41.92" width="74" height="0.3" fill="#dcdcdc"/><rect x="1" y="43.64" width="74" height="0.3" fill="#dcdcdc"/><rect x="1" y="45.36" width="74" height="0.3" fill="#dcdcdc"/><rect x="1" y="47.08" width="74" height="0.3" fill="#dcdcdc"/><rect x="1" y="48.8" width="74" height="0.3" fill="#dcdcdc"/><rect x="1" y="50.52" width="74" height="0.3" fill="#dcdcdc"/><rect x="1" y="52.24" width="74" height="0.3" fill="#dcdcdc"/><rect x="42" y="53.96" width="33" height="0.3" fill="#dcdcdc"/><rect x="42" y="55.68" width="33" height="0.3" fill="#dcdcdc"/><rect x="42" y="57.4" width="33" height="0.3" fill="#dcdcdc"/><rect x="42" y="59.12" width="33" height="0.3" fill="#dcdcdc"/><rect x="42" y="60.84" width="33" height="0.3" fill="#dcdcdc"/><rect x="1" y="24.3" width="74" height="0.5" fill="#9a9a9a"/><rect x="1" y="31.5" width="74" height="0.5" fill="#9a9a9a"/><rect x="1" y="38.4" width="74" height="0.5" fill="#9a9a9a"/><rect x="1" y="45.3" width="74" height="0.5" fill="#9a9a9a"/><rect x="1" y="48.4" width="74" height="0.5" fill="#9a9a9a"/><rect x="1.6" y="21.95" width="3.0" height="0.7" fill="#777"/><rect x="5.4" y="21.95" width="3.35" height="0.7" fill="#777"/><rect x="12.6" y="21.95" width="2.36" height="0.7" fill="#707070"/><rect x="15.46" y="21.95" width="2.45" height="0.7" fill="#707070"/><rect x="18.41" y="21.95" width="2.37" height="0.7" fill="#707070"/><rect x="35.3" y="21.95" width="1.23" height="0.7" fill="#888"/><rect x="42.6" y="21.95" width="1.97" height="0.7" fill="#777"/><rect x="50.4" y="21.95" width="3.96" height="0.7" fill="#6a6a6a"/><rect x="56.8" y="21.95" width="2.3" height="0.7" fill="#6a6a6a"/><rect x="59.6" y="21.95" width="2.57" height="0.7" fill="#6a6a6a"/><rect x="62.67" y="21.95" width="1.76" height="0.7" fill="#6a6a6a"/><rect x="64.93" y="21.95" width="1.03" height="0.7" fill="#6a6a6a"/><rect x="72.3" y="21.95" width="0.98" height="0.7" fill="#999"/><rect x="1.6" y="23.67" width="2.38" height="0.7" fill="#777"/><rect x="5.4" y="23.67" width="2.26" height="0.7" fill="#777"/><rect x="12.6" y="23.67" width="2.27" height="0.7" fill="#707070"/><rect x="15.37" y="23.67" width="1.59" height="0.7" fill="#707070"/><rect x="17.47" y="23.67" width="1.01" height="0.7" fill="#707070"/><rect x="35.3" y="23.67" width="1.33" height="0.7" fill="#888"/><rect x="42.6" y="23.67" width="2.53" height="0.7" fill="#777"/><rect x="50.4" y="23.67" width="2.38" height="0.7" fill="#6a6a6a"/><rect x="56.8" y="23.67" width="2.19" height="0.7" fill="#6a6a6a"/><rect x="59.49" y="23.67" width="1.58" height="0.7" fill="#6a6a6a"/><rect x="61.58" y="23.67" width="1.38" height="0.7" fill="#6a6a6a"/><rect x="72.3" y="23.67" width="0.99" height="0.7" fill="#999"/><rect x="1.6" y="25.39" width="2.98" height="0.7" fill="#777"/><rect x="5.4" y="25.39" width="2.49" height="0.7" fill="#777"/><rect x="12.6" y="25.39" width="2.47" height="0.7" fill="#707070"/><rect x="15.57" y="25.39" width="2.98" height="0.7" fill="#707070"/><rect x="19.05" y="25.39" width="1.22" height="0.7" fill="#707070"/><rect x="35.3" y="25.39" width="1.14" height="0.7" fill="#888"/><rect x="42.6" y="25.39" width="2.05" height="0.7" fill="#777"/><rect x="50.4" y="25.39" width="2.9" height="0.7" fill="#6a6a6a"/><rect x="56.8" y="25.39" width="2.17" height="0.7" fill="#6a6a6a"/><rect x="59.47" y="25.39" width="1.41" height="0.7" fill="#6a6a6a"/><rect x="61.38" y="25.39" width="2.46" height="0.7" fill="#6a6a6a"/><rect x="64.33" y="25.39" width="1.81" height="0.7" fill="#6a6a6a"/><rect x="72.3" y="25.39" width="1.06" height="0.7" fill="#999"/><rect x="1.6" y="27.11" width="2.44" height="0.7" fill="#777"/><rect x="5.4" y="27.11" width="2.23" height="0.7" fill="#777"/><rect x="12.6" y="27.11" width="2.42" height="0.7" fill="#707070"/><rect x="15.52" y="27.11" width="2.97" height="0.7" fill="#707070"/><rect x="18.99" y="27.11" width="0.84" height="0.7" fill="#707070"/><rect x="35.3" y="27.11" width="1.27" height="0.7" fill="#888"/><rect x="42.6" y="27.11" width="2.03" height="0.7" fill="#777"/><rect x="50.4" y="27.11" width="2.1" height="0.7" fill="#6a6a6a"/><rect x="56.8" y="27.11" width="1.83" height="0.7" fill="#6a6a6a"/><rect x="59.13" y="27.11" width="1.92" height="0.7" fill="#6a6a6a"/><rect x="61.55" y="27.11" width="0.85" height="0.7" fill="#6a6a6a"/><rect x="72.3" y="27.11" width="1.04" height="0.7" fill="#999"/><rect x="1.6" y="28.83" width="2.88" height="0.7" fill="#777"/><rect x="5.4" y="28.83" width="3.83" height="0.7" fill="#777"/><rect x="12.6" y="28.83" width="2.51" height="0.7" fill="#707070"/><rect x="15.61" y="28.83" width="1.61" height="0.7" fill="#707070"/><rect x="17.72" y="28.83" width="1.59" height="0.7" fill="#707070"/><rect x="19.81" y="28.83" width="1.13" height="0.7" fill="#707070"/><rect x="35.3" y="28.83" width="1.19" height="0.7" fill="#888"/><rect x="42.6" y="28.83" width="2.3" height="0.7" fill="#777"/><rect x="50.4" y="28.83" width="2.4" height="0.7" fill="#6a6a6a"/><rect x="56.8" y="28.83" width="1.57" height="0.7" fill="#6a6a6a"/><rect x="58.87" y="28.83" width="1.66" height="0.7" fill="#6a6a6a"/><rect x="61.03" y="28.83" width="1.92" height="0.7" fill="#6a6a6a"/><rect x="63.45" y="28.83" width="1.93" height="0.7" fill="#6a6a6a"/><rect x="72.3" y="28.83" width="0.94" height="0.7" fill="#999"/><rect x="1.6" y="30.55" width="2.75" height="0.7" fill="#777"/><rect x="5.4" y="30.55" width="2.38" height="0.7" fill="#777"/><rect x="12.6" y="30.55" width="2.14" height="0.7" fill="#707070"/><rect x="15.24" y="30.55" width="2.69" height="0.7" fill="#707070"/><rect x="18.43" y="30.55" width="1.67" height="0.7" fill="#707070"/><rect x="35.3" y="30.55" width="1.1" height="0.7" fill="#888"/><rect x="42.6" y="30.55" width="2.24" height="0.7" fill="#777"/><rect x="50.4" y="30.55" width="2.3" height="0.7" fill="#6a6a6a"/><rect x="56.8" y="30.55" width="2.73" height="0.7" fill="#6a6a6a"/><rect x="60.03" y="30.55" width="2.34" height="0.7" fill="#6a6a6a"/><rect x="72.3" y="30.55" width="1.13" height="0.7" fill="#999"/><rect x="1.6" y="32.27" width="2.95" height="0.7" fill="#777"/><rect x="5.4" y="32.27" width="2.63" height="0.7" fill="#777"/><rect x="12.6" y="32.27" width="1.91" height="0.7" fill="#707070"/><rect x="15.01" y="32.27" width="1.46" height="0.7" fill="#707070"/><rect x="16.97" y="32.27" width="1.72" height="0.7" fill="#707070"/><rect x="19.19" y="32.27" width="1.24" height="0.7" fill="#707070"/><rect x="35.3" y="32.27" width="1.16" height="0.7" fill="#888"/><rect x="42.6" y="32.27" width="2.03" height="0.7" fill="#777"/><rect x="50.4" y="32.27" width="2.6" height="0.7" fill="#6a6a6a"/><rect x="56.8" y="32.27" width="2.05" height="0.7" fill="#6a6a6a"/><rect x="59.35" y="32.27" width="2.07" height="0.7" fill="#6a6a6a"/><rect x="61.92" y="32.27" width="2.52" height="0.7" fill="#6a6a6a"/><rect x="64.95" y="32.27" width="1.68" height="0.7" fill="#6a6a6a"/><rect x="72.3" y="32.27" width="1.0" height="0.7" fill="#999"/><rect x="1.6" y="33.99" width="2.85" height="0.7" fill="#777"/><rect x="5.4" y="33.99" width="4.14" height="0.7" fill="#777"/><rect x="12.6" y="33.99" width="2.48" height="0.7" fill="#707070"/><rect x="15.58" y="33.99" width="1.23" height="0.7" fill="#707070"/><rect x="35.3" y="33.99" width="1.33" height="0.7" fill="#888"/><rect x="42.6" y="33.99" width="1.97" height="0.7" fill="#777"/><rect x="50.4" y="33.99" width="2.34" height="0.7" fill="#6a6a6a"/><rect x="56.8" y="33.99" width="1.63" height="0.7" fill="#6a6a6a"/><rect x="58.93" y="33.99" width="1.2" height="0.7" fill="#6a6a6a"/><rect x="60.63" y="33.99" width="2.27" height="0.7" fill="#6a6a6a"/><rect x="63.4" y="33.99" width="2.26" height="0.7" fill="#6a6a6a"/><rect x="66.16" y="33.99" width="0.68" height="0.7" fill="#6a6a6a"/><rect x="72.3" y="33.99" width="1.04" height="0.7" fill="#999"/><rect x="1.6" y="35.71" width="2.58" height="0.7" fill="#777"/><rect x="5.4" y="35.71" width="3.25" height="0.7" fill="#777"/><rect x="12.6" y="35.71" width="2.2" height="0.7" fill="#707070"/><rect x="15.3" y="35.71" width="2.64" height="0.7" fill="#707070"/><rect x="35.3" y="35.71" width="1.3" height="0.7" fill="#888"/><rect x="42.6" y="35.71" width="2.32" height="0.7" fill="#777"/><rect x="50.4" y="35.71" width="3.07" height="0.7" fill="#6a6a6a"/><rect x="56.8" y="35.71" width="2.66" height="0.7" fill="#6a6a6a"/><rect x="59.96" y="35.71" width="2.98" height="0.7" fill="#6a6a6a"/><rect x="63.43" y="35.71" width="1.07" height="0.7" fill="#6a6a6a"/><rect x="72.3" y="35.71" width="1.17" height="0.7" fill="#999"/><rect x="1.6" y="37.43" width="2.76" height="0.7" fill="#777"/><rect x="5.4" y="37.43" width="3.35" height="0.7" fill="#777"/><rect x="12.6" y="37.43" width="2.39" height="0.7" fill="#707070"/><rect x="15.49" y="37.43" width="1.26" height="0.7" fill="#707070"/><rect x="17.25" y="37.43" width="2.14" height="0.7" fill="#707070"/><rect x="19.89" y="37.43" width="1.42" height="0.7" fill="#707070"/><rect x="35.3" y="37.43" width="1.14" height="0.7" fill="#888"/><rect x="42.6" y="37.43" width="2.31" height="0.7" fill="#777"/><rect x="50.4" y="37.43" width="3.1" height="0.7" fill="#6a6a6a"/><rect x="56.8" y="37.43" width="2.68" height="0.7" fill="#6a6a6a"/><rect x="59.98" y="37.43" width="1.82" height="0.7" fill="#6a6a6a"/><rect x="62.29" y="37.43" width="2.96" height="0.7" fill="#6a6a6a"/><rect x="65.75" y="37.43" width="1.29" height="0.7" fill="#6a6a6a"/><rect x="72.3" y="37.43" width="0.98" height="0.7" fill="#999"/><rect x="1.6" y="39.15" width="2.96" height="0.7" fill="#777"/><rect x="5.4" y="39.15" width="2.4" height="0.7" fill="#777"/><rect x="12.6" y="39.15" width="2.48" height="0.7" fill="#707070"/><rect x="15.58" y="39.15" width="1.45" height="0.7" fill="#707070"/><rect x="17.53" y="39.15" width="1.55" height="0.7" fill="#707070"/><rect x="35.3" y="39.15" width="1.11" height="0.7" fill="#888"/><rect x="42.6" y="39.15" width="2.02" height="0.7" fill="#777"/><rect x="50.4" y="39.15" width="3.92" height="0.7" fill="#6a6a6a"/><rect x="56.8" y="39.15" width="2.12" height="0.7" fill="#6a6a6a"/><rect x="59.42" y="39.15" width="2.59" height="0.7" fill="#6a6a6a"/><rect x="62.51" y="39.15" width="2.09" height="0.7" fill="#6a6a6a"/><rect x="72.3" y="39.15" width="1.09" height="0.7" fill="#999"/><rect x="1.6" y="40.87" width="3.0" height="0.7" fill="#777"/><rect x="5.4" y="40.87" width="2.25" height="0.7" fill="#777"/><rect x="12.6" y="40.87" width="1.71" height="0.7" fill="#707070"/><rect x="14.81" y="40.87" width="1.45" height="0.7" fill="#707070"/><rect x="16.76" y="40.87" width="0.77" height="0.7" fill="#707070"/><rect x="35.3" y="40.87" width="1.32" height="0.7" fill="#888"/><rect x="42.6" y="40.87" width="2.22" height="0.7" fill="#777"/><rect x="50.4" y="40.87" width="2.35" height="0.7" fill="#6a6a6a"/><rect x="56.8" y="40.87" width="1.26" height="0.7" fill="#6a6a6a"/><rect x="58.56" y="40.87" width="2.91" height="0.7" fill="#6a6a6a"/><rect x="61.98" y="40.87" width="0.98" height="0.7" fill="#6a6a6a"/><rect x="72.3" y="40.87" width="1.18" height="0.7" fill="#999"/><rect x="1.6" y="42.59" width="2.7" height="0.7" fill="#777"/><rect x="5.4" y="42.59" width="2.81" height="0.7" fill="#777"/><rect x="12.6" y="42.59" width="2.42" height="0.7" fill="#707070"/><rect x="15.52" y="42.59" width="2.33" height="0.7" fill="#707070"/><rect x="18.35" y="42.59" width="1.35" height="0.7" fill="#707070"/><rect x="20.21" y="42.59" width="1.77" height="0.7" fill="#707070"/><rect x="35.3" y="42.59" width="1.08" height="0.7" fill="#888"/><rect x="42.6" y="42.59" width="2.07" height="0.7" fill="#777"/><rect x="50.4" y="42.59" width="2.96" height="0.7" fill="#6a6a6a"/><rect x="56.8" y="42.59" width="2.21" height="0.7" fill="#6a6a6a"/><rect x="59.51" y="42.59" width="2.08" height="0.7" fill="#6a6a6a"/><rect x="62.09" y="42.59" width="2.49" height="0.7" fill="#6a6a6a"/><rect x="65.08" y="42.59" width="1.06" height="0.7" fill="#6a6a6a"/><rect x="72.3" y="42.59" width="0.95" height="0.7" fill="#999"/><rect x="1.6" y="44.31" width="2.29" height="0.7" fill="#777"/><rect x="5.4" y="44.31" width="2.67" height="0.7" fill="#777"/><rect x="12.6" y="44.31" width="1.27" height="0.7" fill="#707070"/><rect x="14.37" y="44.31" width="2.42" height="0.7" fill="#707070"/><rect x="35.3" y="44.31" width="1.35" height="0.7" fill="#888"/><rect x="42.6" y="44.31" width="2.46" height="0.7" fill="#777"/><rect x="50.4" y="44.31" width="3.72" height="0.7" fill="#6a6a6a"/><rect x="56.8" y="44.31" width="2.85" height="0.7" fill="#6a6a6a"/><rect x="60.15" y="44.31" width="2.03" height="0.7" fill="#6a6a6a"/><rect x="62.67" y="44.31" width="0.85" height="0.7" fill="#6a6a6a"/><rect x="72.3" y="44.31" width="1.06" height="0.7" fill="#999"/><rect x="1.6" y="46.03" width="2.87" height="0.7" fill="#777"/><rect x="5.4" y="46.03" width="3.72" height="0.7" fill="#777"/><rect x="12.6" y="46.03" width="1.92" height="0.7" fill="#707070"/><rect x="15.02" y="46.03" width="2.58" height="0.7" fill="#707070"/><rect x="18.1" y="46.03" width="2.09" height="0.7" fill="#707070"/><rect x="35.3" y="46.03" width="1.19" height="0.7" fill="#888"/><rect x="42.6" y="46.03" width="2.06" height="0.7" fill="#777"/><rect x="50.4" y="46.03" width="3.9" height="0.7" fill="#6a6a6a"/><rect x="56.8" y="46.03" width="2.61" height="0.7" fill="#6a6a6a"/><rect x="59.91" y="46.03" width="2.37" height="0.7" fill="#6a6a6a"/><rect x="62.78" y="46.03" width="2.73" height="0.7" fill="#6a6a6a"/><rect x="72.3" y="46.03" width="1.17" height="0.7" fill="#999"/><rect x="1.6" y="47.75" width="2.61" height="0.7" fill="#777"/><rect x="5.4" y="47.75" width="3.15" height="0.7" fill="#777"/><rect x="12.6" y="47.75" width="2.88" height="0.7" fill="#707070"/><rect x="15.98" y="47.75" width="1.57" height="0.7" fill="#707070"/><rect x="35.3" y="47.75" width="1.31" height="0.7" fill="#888"/><rect x="42.6" y="47.75" width="2.47" height="0.7" fill="#777"/><rect x="50.4" y="47.75" width="3.41" height="0.7" fill="#6a6a6a"/><rect x="56.8" y="47.75" width="2.29" height="0.7" fill="#6a6a6a"/><rect x="59.59" y="47.75" width="2.29" height="0.7" fill="#6a6a6a"/><rect x="72.3" y="47.75" width="1.11" height="0.7" fill="#999"/><rect x="1.6" y="49.47" width="2.64" height="0.7" fill="#777"/><rect x="5.4" y="49.47" width="4.12" height="0.7" fill="#777"/><rect x="12.6" y="49.47" width="1.67" height="0.7" fill="#707070"/><rect x="14.77" y="49.47" width="2.43" height="0.7" fill="#707070"/><rect x="17.7" y="49.47" width="1.88" height="0.7" fill="#707070"/><rect x="35.3" y="49.47" width="1.09" height="0.7" fill="#888"/><rect x="42.6" y="49.47" width="2.47" height="0.7" fill="#777"/><rect x="50.4" y="49.47" width="2.98" height="0.7" fill="#6a6a6a"/><rect x="56.8" y="49.47" width="1.65" height="0.7" fill="#6a6a6a"/><rect x="58.95" y="49.47" width="2.87" height="0.7" fill="#6a6a6a"/><rect x="62.32" y="49.47" width="2.68" height="0.7" fill="#6a6a6a"/><rect x="65.5" y="49.47" width="1.11" height="0.7" fill="#6a6a6a"/><rect x="72.3" y="49.47" width="1.01" height="0.7" fill="#999"/><rect x="1.6" y="51.19" width="2.78" height="0.7" fill="#777"/><rect x="5.4" y="51.19" width="2.4" height="0.7" fill="#777"/><rect x="12.6" y="51.19" width="2.98" height="0.7" fill="#707070"/><rect x="16.08" y="51.19" width="2.88" height="0.7" fill="#707070"/><rect x="19.46" y="51.19" width="1.53" height="0.7" fill="#707070"/><rect x="35.3" y="51.19" width="1.29" height="0.7" fill="#888"/><rect x="42.6" y="51.19" width="2.31" height="0.7" fill="#777"/><rect x="50.4" y="51.19" width="3.29" height="0.7" fill="#6a6a6a"/><rect x="56.8" y="51.19" width="2.58" height="0.7" fill="#6a6a6a"/><rect x="59.88" y="51.19" width="1.92" height="0.7" fill="#6a6a6a"/><rect x="62.29" y="51.19" width="2.5" height="0.7" fill="#6a6a6a"/><rect x="72.3" y="51.19" width="1.06" height="0.7" fill="#999"/><rect x="42.6" y="52.91" width="2.33" height="0.7" fill="#777"/><rect x="50.4" y="52.91" width="3.8" height="0.7" fill="#6a6a6a"/><rect x="56.8" y="52.91" width="2.28" height="0.7" fill="#6a6a6a"/><rect x="59.58" y="52.91" width="1.75" height="0.7" fill="#6a6a6a"/><rect x="61.83" y="52.91" width="0.84" height="0.7" fill="#6a6a6a"/><rect x="72.3" y="52.91" width="1.19" height="0.7" fill="#999"/><rect x="42.6" y="54.63" width="2.46" height="0.7" fill="#777"/><rect x="50.4" y="54.63" width="2.03" height="0.7" fill="#6a6a6a"/><rect x="56.8" y="54.63" width="2.0" height="0.7" fill="#6a6a6a"/><rect x="59.3" y="54.63" width="1.28" height="0.7" fill="#6a6a6a"/><rect x="61.08" y="54.63" width="1.14" height="0.7" fill="#6a6a6a"/><rect x="72.3" y="54.63" width="1.16" height="0.7" fill="#999"/><rect x="42.6" y="56.35" width="2.48" height="0.7" fill="#777"/><rect x="50.4" y="56.35" width="3.69" height="0.7" fill="#6a6a6a"/><rect x="56.8" y="56.35" width="1.86" height="0.7" fill="#6a6a6a"/><rect x="59.16" y="56.35" width="2.41" height="0.7" fill="#6a6a6a"/><rect x="62.06" y="56.35" width="2.9" height="0.7" fill="#6a6a6a"/><rect x="72.3" y="56.35" width="0.98" height="0.7" fill="#999"/><rect x="42.6" y="58.07" width="2.22" height="0.7" fill="#777"/><rect x="50.4" y="58.07" width="2.23" height="0.7" fill="#6a6a6a"/><rect x="56.8" y="58.07" width="2.18" height="0.7" fill="#6a6a6a"/><rect x="59.48" y="58.07" width="1.49" height="0.7" fill="#6a6a6a"/><rect x="61.48" y="58.07" width="2.71" height="0.7" fill="#6a6a6a"/><rect x="64.69" y="58.07" width="1.96" height="0.7" fill="#6a6a6a"/><rect x="72.3" y="58.07" width="1.07" height="0.7" fill="#999"/><rect x="42.6" y="59.79" width="2.57" height="0.7" fill="#777"/><rect x="50.4" y="59.79" width="3.17" height="0.7" fill="#6a6a6a"/><rect x="56.8" y="59.79" width="2.11" height="0.7" fill="#6a6a6a"/><rect x="59.41" y="59.79" width="1.45" height="0.7" fill="#6a6a6a"/><rect x="61.36" y="59.79" width="2.56" height="0.7" fill="#6a6a6a"/><rect x="72.3" y="59.79" width="1.03" height="0.7" fill="#999"/><rect x="1" y="19.4" width="0.35" height="32.4" fill="#c8c8c8"/><rect x="11.2" y="19.4" width="0.35" height="32.4" fill="#c8c8c8"/><rect x="34.6" y="19.4" width="0.35" height="32.4" fill="#c8c8c8"/><rect x="38.2" y="19.4" width="0.35" height="41.6" fill="#c8c8c8"/><rect x="42" y="19.4" width="0.35" height="41.6" fill="#c8c8c8"/><rect x="49.7" y="19.4" width="0.35" height="41.6" fill="#c8c8c8"/><rect x="55.9" y="19.4" width="0.35" height="41.6" fill="#c8c8c8"/><rect x="71.3" y="19.4" width="0.35" height="41.6" fill="#c8c8c8"/><rect x="74.8" y="19.4" width="0.35" height="41.6" fill="#c8c8c8"/><rect x="1" y="51.6" width="37" height="0.4" fill="#bbb"/><rect x="42" y="61" width="33" height="0.4" fill="#bbb"/><circle cx="37" cy="53.4" r="1.7" fill="#fff" stroke="#27359b" stroke-width="1"/><rect x="38.6" y="51" width="2.6" height="3.6" fill="#f4d23c" rx="1"/><rect x="8" y="54.7" width="3.8" height="0.65" fill="#8a8a8a"/><rect x="12.5" y="54.7" width="2.09" height="0.65" fill="#8a8a8a"/><rect x="15.28" y="54.7" width="3.64" height="0.65" fill="#8a8a8a"/><rect x="19.62" y="54.7" width="3.67" height="0.65" fill="#8a8a8a"/><rect x="23.99" y="54.7" width="2.62" height="0.65" fill="#8a8a8a"/><rect x="27.31" y="54.7" width="3.34" height="0.65" fill="#8a8a8a"/><rect x="31.35" y="54.7" width="2.65" height="0.65" fill="#8a8a8a"/><rect x="4" y="56.3" width="3.61" height="0.65" fill="#8a8a8a"/><rect x="8.31" y="56.3" width="2.55" height="0.65" fill="#8a8a8a"/><rect x="11.56" y="56.3" width="3.78" height="0.65" fill="#8a8a8a"/><rect x="16.04" y="56.3" width="2.0" height="0.65" fill="#8a8a8a"/><rect x="18.74" y="56.3" width="3.92" height="0.65" fill="#8a8a8a"/><rect x="23.36" y="56.3" width="3.36" height="0.65" fill="#8a8a8a"/><rect x="27.42" y="56.3" width="3.39" height="0.65" fill="#8a8a8a"/><rect x="31.51" y="56.3" width="3.49" height="0.65" fill="#8a8a8a"/><rect x="3" y="58.2" width="1.67" height="0.65" fill="#9a9a9a"/><rect x="5.37" y="58.2" width="4.06" height="0.65" fill="#9a9a9a"/><rect x="10.13" y="58.2" width="3.7" height="0.65" fill="#9a9a9a"/><rect x="14.53" y="58.2" width="4.12" height="0.65" fill="#9a9a9a"/><rect x="19.35" y="58.2" width="4.08" height="0.65" fill="#9a9a9a"/><rect x="24.13" y="58.2" width="3.62" height="0.65" fill="#9a9a9a"/><rect x="28.45" y="58.2" width="1.66" height="0.65" fill="#9a9a9a"/><rect x="30.81" y="58.2" width="2.24" height="0.65" fill="#9a9a9a"/><rect x="33.74" y="58.2" width="1.6" height="0.65" fill="#9a9a9a"/><rect x="1" y="59.9" width="36" height="0.35" fill="#ccc"/><rect x="1" y="52" width="0.35" height="8" fill="#ccc"/></svg></div>
<div class="abtn" style="left:1768px;top:486.90px;width:33px;background:#3ec9d6"></div>
<i class="ic" style="left:1777.65px;top:496.20px"><svg width="14" height="14" viewBox="0 0 24 24" fill="none" stroke="#fff" stroke-width="2.1" stroke-linecap="round" stroke-linejoin="round"><path d="M4 20h4l10.5 -10.5a1.5 1.5 0 0 0 -4 -4l-10.5 10.5v4 M13.5 6.5l4 4"/></svg></i>
<div class="abtn" style="left:1809px;top:486.90px;width:32px;background:#ff3a6e"></div>
<i class="ic" style="left:1818.00px;top:495.90px"><svg width="14" height="14" viewBox="0 0 24 24" fill="none" stroke="#fff" stroke-width="2.1" stroke-linecap="round" stroke-linejoin="round"><path d="M4 7l16 0 M10 11l0 6 M14 11l0 6 M5 7l1 12a2 2 0 0 0 2 2h8a2 2 0 0 0 2 -2l1 -12 M9 7v-3a1 1 0 0 1 1 -1h4a1 1 0 0 1 1 1v3"/></svg></i>
<div class="rb" style="top:658.20px"></div>
<span class="x " style="left:335.00px;top:597.15px;font-size:14px;letter-spacing:0.219px;color:#293240;">3</span>
<span class="x " style="left:397.00px;top:597.15px;font-size:14px;letter-spacing:0.403px;color:#293240;">Quarterly exams</span>
<span class="x " style="left:589.00px;top:597.15px;font-size:14px;letter-spacing:-1.297px;color:#293240;">C</span>
<span class="x " style="left:699.00px;top:597.15px;font-size:14px;letter-spacing:-0.260px;color:#293240;">Class 3</span>
<span class="x " style="left:854.00px;top:597.15px;font-size:14px;letter-spacing:0.438px;color:#293240;">18</span>
<span class="x " style="left:1037.00px;top:597.15px;font-size:14px;letter-spacing:0.438px;color:#293240;">30</span>
<span class="x " style="left:1204.00px;top:597.15px;font-size:14px;letter-spacing:0.160px;color:#293240;">14-07-2024</span>
<span class="x " style="left:1402.00px;top:597.15px;font-size:14px;letter-spacing:0.160px;color:#293240;">28-07-2024</span>
<div class="thumb" style="top:566.80px"><svg width="76" height="76" viewBox="0 0 76 76"><rect x="1.2" y="17.2" width="73.7" height="6" fill="#8faadc"/><rect x="5" y="20" width="6.2" height="0.9" fill="#4a5a85"/><rect x="22.1" y="20" width="3.3" height="0.9" fill="#4a5a85"/><rect x="45.3" y="20" width="3.7" height="0.9" fill="#4a5a85"/><rect x="64.9" y="18.9" width="6.5" height="0.8" fill="#4a5a85"/><rect x="64.9" y="21.3" width="6.5" height="1" fill="#4a5a85"/><rect x="1.2" y="17.2" width="73.7" height="39.6" fill="none" stroke="#999" stroke-width=".4"/><rect x="15.4" y="17.2" width="0.4" height="39.6" fill="#999"/><rect x="31.3" y="17.2" width="0.4" height="39.6" fill="#999"/><rect x="62.3" y="17.2" width="0.4" height="39.6" fill="#999"/><rect x="15.6" y="39.4" width="15.9" height="0.45" fill="#888"/><rect x="31.5" y="25.75" width="43.4" height="0.4" fill="#b0b0b0"/><rect x="31.5" y="28.55" width="43.4" height="0.65" fill="#666"/><rect x="31.5" y="31.35" width="43.4" height="0.65" fill="#666"/><rect x="31.5" y="34.15" width="43.4" height="0.4" fill="#b0b0b0"/><rect x="31.5" y="36.95" width="43.4" height="0.4" fill="#b0b0b0"/><rect x="31.5" y="39.75" width="43.4" height="0.4" fill="#b0b0b0"/><rect x="31.5" y="42.55" width="43.4" height="0.65" fill="#666"/><rect x="31.5" y="45.35" width="43.4" height="0.65" fill="#666"/><rect x="31.5" y="48.15" width="43.4" height="0.4" fill="#b0b0b0"/><rect x="31.5" y="50.95" width="43.4" height="0.4" fill="#b0b0b0"/><rect x="31.5" y="53.75" width="43.4" height="0.65" fill="#666"/><rect x="37.0" y="24.2" width="3.06" height="0.8" fill="#6e6e6e"/><rect x="40.61" y="24.2" width="2.35" height="0.8" fill="#6e6e6e"/><rect x="43.51" y="24.2" width="2.35" height="0.8" fill="#6e6e6e"/><rect x="46.41" y="24.2" width="2.53" height="0.8" fill="#6e6e6e"/><rect x="49.49" y="24.2" width="3.19" height="0.8" fill="#6e6e6e"/><rect x="53.23" y="24.2" width="2.53" height="0.8" fill="#6e6e6e"/><rect x="56.31" y="24.2" width="0.69" height="0.8" fill="#6e6e6e"/><rect x="68.3" y="24.2" width="0.7" height="0.8" fill="#666"/><rect x="36.0" y="27.0" width="2.05" height="0.8" fill="#6e6e6e"/><rect x="38.6" y="27.0" width="2.73" height="0.8" fill="#6e6e6e"/><rect x="41.88" y="27.0" width="1.67" height="0.8" fill="#6e6e6e"/><rect x="44.1" y="27.0" width="3.4" height="0.8" fill="#6e6e6e"/><rect x="48.06" y="27.0" width="3.76" height="0.8" fill="#6e6e6e"/><rect x="52.36" y="27.0" width="1.78" height="0.8" fill="#6e6e6e"/><rect x="54.69" y="27.0" width="3.31" height="0.8" fill="#6e6e6e"/><rect x="68.3" y="27.0" width="0.7" height="0.8" fill="#666"/><rect x="34.5" y="29.8" width="3.26" height="0.8" fill="#6e6e6e"/><rect x="38.31" y="29.8" width="2.75" height="0.8" fill="#6e6e6e"/><rect x="41.61" y="29.8" width="3.97" height="0.8" fill="#6e6e6e"/><rect x="46.13" y="29.8" width="2.53" height="0.8" fill="#6e6e6e"/><rect x="49.22" y="29.8" width="1.98" height="0.8" fill="#6e6e6e"/><rect x="51.74" y="29.8" width="3.28" height="0.8" fill="#6e6e6e"/><rect x="55.57" y="29.8" width="2.51" height="0.8" fill="#6e6e6e"/><rect x="58.62" y="29.8" width="0.88" height="0.8" fill="#6e6e6e"/><rect x="68.3" y="29.8" width="0.7" height="0.8" fill="#666"/><rect x="43.5" y="32.6" width="4.0" height="0.8" fill="#6e6e6e"/><rect x="48.05" y="32.6" width="1.75" height="0.8" fill="#6e6e6e"/><rect x="68.3" y="32.6" width="0.7" height="0.8" fill="#666"/><rect x="36.0" y="35.4" width="2.21" height="0.8" fill="#6e6e6e"/><rect x="38.76" y="35.4" width="3.06" height="0.8" fill="#6e6e6e"/><rect x="42.37" y="35.4" width="1.79" height="0.8" fill="#6e6e6e"/><rect x="44.71" y="35.4" width="3.86" height="0.8" fill="#6e6e6e"/><rect x="49.11" y="35.4" width="2.85" height="0.8" fill="#6e6e6e"/><rect x="52.52" y="35.4" width="3.22" height="0.8" fill="#6e6e6e"/><rect x="56.29" y="35.4" width="1.71" height="0.8" fill="#6e6e6e"/><rect x="68.3" y="35.4" width="0.7" height="0.8" fill="#666"/><rect x="41.0" y="38.2" width="2.92" height="0.8" fill="#6e6e6e"/><rect x="44.47" y="38.2" width="2.67" height="0.8" fill="#6e6e6e"/><rect x="47.69" y="38.2" width="2.23" height="0.8" fill="#6e6e6e"/><rect x="50.47" y="38.2" width="2.53" height="0.8" fill="#6e6e6e"/><rect x="68.3" y="38.2" width="0.7" height="0.8" fill="#666"/><rect x="40.0" y="41.0" width="3.46" height="0.8" fill="#6e6e6e"/><rect x="44.01" y="41.0" width="2.45" height="0.8" fill="#6e6e6e"/><rect x="47.02" y="41.0" width="1.55" height="0.8" fill="#6e6e6e"/><rect x="49.12" y="41.0" width="2.35" height="0.8" fill="#6e6e6e"/><rect x="52.02" y="41.0" width="1.98" height="0.8" fill="#6e6e6e"/><rect x="68.3" y="41.0" width="0.7" height="0.8" fill="#666"/><rect x="43.0" y="43.8" width="1.53" height="0.8" fill="#6e6e6e"/><rect x="45.08" y="43.8" width="3.33" height="0.8" fill="#6e6e6e"/><rect x="48.96" y="43.8" width="1.6" height="0.8" fill="#6e6e6e"/><rect x="68.3" y="43.8" width="0.7" height="0.8" fill="#666"/><rect x="39.0" y="46.6" width="2.65" height="0.8" fill="#6e6e6e"/><rect x="42.2" y="46.6" width="3.48" height="0.8" fill="#6e6e6e"/><rect x="46.24" y="46.6" width="3.97" height="0.8" fill="#6e6e6e"/><rect x="50.75" y="46.6" width="3.08" height="0.8" fill="#6e6e6e"/><rect x="54.39" y="46.6" width="0.61" height="0.8" fill="#6e6e6e"/><rect x="68.3" y="46.6" width="0.7" height="0.8" fill="#666"/><rect x="40.5" y="49.4" width="3.07" height="0.8" fill="#6e6e6e"/><rect x="44.12" y="49.4" width="2.06" height="0.8" fill="#6e6e6e"/><rect x="46.73" y="49.4" width="2.45" height="0.8" fill="#6e6e6e"/><rect x="49.73" y="49.4" width="1.69" height="0.8" fill="#6e6e6e"/><rect x="51.97" y="49.4" width="1.53" height="0.8" fill="#6e6e6e"/><rect x="68.3" y="49.4" width="0.7" height="0.8" fill="#666"/><rect x="42.5" y="52.2" width="3.66" height="0.8" fill="#6e6e6e"/><rect x="46.71" y="52.2" width="1.64" height="0.8" fill="#6e6e6e"/><rect x="48.91" y="52.2" width="2.27" height="0.8" fill="#6e6e6e"/><rect x="68.3" y="52.2" width="0.7" height="0.8" fill="#666"/><rect x="42.0" y="55.0" width="2.79" height="0.8" fill="#6e6e6e"/><rect x="45.34" y="55.0" width="1.81" height="0.8" fill="#6e6e6e"/><rect x="47.69" y="55.0" width="3.78" height="0.8" fill="#6e6e6e"/><rect x="68.3" y="55.0" width="0.7" height="0.8" fill="#666"/><rect x="5.2" y="38.2" width="2.47" height="0.9" fill="#666"/><rect x="8.37" y="38.2" width="2.43" height="0.9" fill="#666"/><rect x="4.2" y="40.5" width="3.31" height="0.9" fill="#666"/><rect x="8.21" y="40.5" width="2.81" height="0.9" fill="#666"/><rect x="17.2" y="31.2" width="2.88" height="0.9" fill="#555"/><rect x="20.58" y="31.2" width="4.05" height="0.9" fill="#555"/><rect x="25.13" y="31.2" width="3.88" height="0.9" fill="#555"/><rect x="18.9" y="46.8" width="3.03" height="0.9" fill="#777"/><rect x="22.63" y="46.8" width="1.91" height="0.9" fill="#777"/><rect x="25.25" y="46.8" width="2.88" height="0.9" fill="#777"/><rect x="19.6" y="49" width="1.67" height="0.9" fill="#777"/><rect x="21.97" y="49" width="2.61" height="0.9" fill="#777"/><rect x="25.28" y="49" width="2.32" height="0.9" fill="#777"/></svg></div>
<div class="abtn" style="left:1768px;top:591.30px;width:33px;background:#3ec9d6"></div>
<i class="ic" style="left:1777.65px;top:600.60px"><svg width="14" height="14" viewBox="0 0 24 24" fill="none" stroke="#fff" stroke-width="2.1" stroke-linecap="round" stroke-linejoin="round"><path d="M4 20h4l10.5 -10.5a1.5 1.5 0 0 0 -4 -4l-10.5 10.5v4 M13.5 6.5l4 4"/></svg></i>
<div class="abtn" style="left:1809px;top:591.30px;width:32px;background:#ff3a6e"></div>
<i class="ic" style="left:1818.00px;top:600.30px"><svg width="14" height="14" viewBox="0 0 24 24" fill="none" stroke="#fff" stroke-width="2.1" stroke-linecap="round" stroke-linejoin="round"><path d="M4 7l16 0 M10 11l0 6 M14 11l0 6 M5 7l1 12a2 2 0 0 0 2 2h8a2 2 0 0 0 2 -2l1 -12 M9 7v-3a1 1 0 0 1 1 -1h4a1 1 0 0 1 1 1v3"/></svg></i>
<div class="rb" style="top:762.60px"></div>
<span class="x " style="left:335.00px;top:701.15px;font-size:14px;letter-spacing:0.219px;color:#293240;">4</span>
<span class="x " style="left:397.00px;top:701.15px;font-size:14px;letter-spacing:0.420px;color:#293240;">Unit tests</span>
<span class="x " style="left:589.00px;top:701.15px;font-size:14px;letter-spacing:0.047px;color:#293240;">D</span>
<span class="x " style="left:699.00px;top:701.15px;font-size:14px;letter-spacing:-0.260px;color:#293240;">Class 4</span>
<span class="x " style="left:854.00px;top:701.15px;font-size:14px;letter-spacing:0.219px;color:#293240;">7</span>
<span class="x " style="left:1037.00px;top:701.15px;font-size:14px;letter-spacing:0.438px;color:#293240;">20</span>
<span class="x " style="left:1204.00px;top:701.15px;font-size:14px;letter-spacing:0.160px;color:#293240;">01-05-2024</span>
<span class="x " style="left:1402.00px;top:701.15px;font-size:14px;letter-spacing:0.160px;color:#293240;">29-05-2024</span>
<div class="thumb" style="top:671.20px"><svg width="76" height="76" viewBox="0 0 76 76"><linearGradient id="g3" x1="0" x2="1" y1="0" y2="0"><stop offset="0" stop-color="#b24fa4"/><stop offset="1" stop-color="#7989d1"/></linearGradient><rect x="12.1" y="0" width="51" height="8.8" fill="url(#g3)"/><rect x="25.8" y="3.1" width="3.23" height="2.8" fill="#f6ebf8"/><rect x="29.93" y="3.1" width="3.07" height="2.8" fill="#f6ebf8"/><rect x="33.9" y="3.1" width="2.91" height="2.8" fill="#f6ebf8"/><rect x="37.71" y="3.1" width="3.18" height="2.8" fill="#f6ebf8"/><rect x="41.79" y="3.1" width="3.21" height="2.8" fill="#f6ebf8"/><rect x="45.9" y="3.1" width="2.82" height="2.8" fill="#f6ebf8"/><rect x="21.3" y="11.9" width="7.77" height="2.5" fill="#3b8229"/><rect x="29.87" y="11.9" width="6.53" height="2.5" fill="#3b8229"/><rect x="37.2" y="11.9" width="7.96" height="2.5" fill="#3b8229"/><rect x="45.95" y="11.9" width="5.43" height="2.5" fill="#3b8229"/><rect x="52.18" y="11.9" width="2.82" height="2.5" fill="#3b8229"/><rect x="21.3" y="14.9" width="33.7" height="0.55" fill="#3b8229"/><rect x="15.6" y="18.7" width="3.34" height="0.9" fill="#8c8c8c"/><rect x="19.64" y="18.7" width="2.56" height="0.9" fill="#8c8c8c"/><rect x="22.9" y="18.7" width="3.61" height="0.9" fill="#8c8c8c"/><rect x="27.21" y="18.7" width="3.63" height="0.9" fill="#8c8c8c"/><rect x="31.54" y="18.7" width="2.77" height="0.9" fill="#8c8c8c"/><rect x="35.01" y="18.7" width="2.44" height="0.9" fill="#8c8c8c"/><rect x="38.15" y="18.7" width="3.07" height="0.9" fill="#8c8c8c"/><rect x="41.92" y="18.7" width="3.74" height="0.9" fill="#8c8c8c"/><rect x="46.36" y="18.7" width="3.17" height="0.9" fill="#8c8c8c"/><rect x="50.24" y="18.7" width="3.61" height="0.9" fill="#8c8c8c"/><rect x="15.6" y="22.3" width="2.1" height="0.75" fill="#a8a8a8"/><rect x="18.4" y="22.3" width="1.75" height="0.75" fill="#a8a8a8"/><rect x="20.84" y="22.3" width="2.34" height="0.75" fill="#a8a8a8"/><rect x="23.88" y="22.3" width="3.41" height="0.75" fill="#a8a8a8"/><rect x="27.99" y="22.3" width="3.37" height="0.75" fill="#a8a8a8"/><rect x="32.06" y="22.3" width="1.62" height="0.75" fill="#a8a8a8"/><rect x="34.37" y="22.3" width="2.27" height="0.75" fill="#a8a8a8"/><rect x="37.34" y="22.3" width="4.05" height="0.75" fill="#a8a8a8"/><rect x="42.09" y="22.3" width="1.7" height="0.75" fill="#a8a8a8"/><rect x="44.49" y="22.3" width="2.24" height="0.75" fill="#a8a8a8"/><rect x="47.43" y="22.3" width="3.2" height="0.75" fill="#a8a8a8"/><rect x="15.6" y="24.1" width="2.57" height="0.75" fill="#a8a8a8"/><rect x="18.87" y="24.1" width="2.16" height="0.75" fill="#a8a8a8"/><rect x="21.73" y="24.1" width="1.63" height="0.75" fill="#a8a8a8"/><rect x="24.06" y="24.1" width="1.84" height="0.75" fill="#a8a8a8"/><rect x="26.6" y="24.1" width="3.86" height="0.75" fill="#a8a8a8"/><rect x="31.16" y="24.1" width="2.95" height="0.75" fill="#a8a8a8"/><rect x="34.81" y="24.1" width="3.04" height="0.75" fill="#a8a8a8"/><rect x="38.55" y="24.1" width="2.76" height="0.75" fill="#a8a8a8"/><rect x="42.01" y="24.1" width="2.65" height="0.75" fill="#a8a8a8"/><rect x="45.36" y="24.1" width="3.25" height="0.75" fill="#a8a8a8"/><rect x="49.31" y="24.1" width="1.95" height="0.75" fill="#a8a8a8"/><rect x="51.95" y="24.1" width="4.11" height="0.75" fill="#a8a8a8"/><rect x="15.6" y="26.1" width="3.33" height="0.75" fill="#a8a8a8"/><rect x="19.63" y="26.1" width="1.68" height="0.75" fill="#a8a8a8"/><rect x="22.0" y="26.1" width="4.14" height="0.75" fill="#a8a8a8"/><rect x="26.84" y="26.1" width="2.73" height="0.75" fill="#a8a8a8"/><rect x="30.27" y="26.1" width="2.64" height="0.75" fill="#a8a8a8"/><rect x="33.61" y="26.1" width="3.99" height="0.75" fill="#a8a8a8"/><rect x="38.3" y="26.1" width="1.64" height="0.75" fill="#a8a8a8"/><rect x="40.64" y="26.1" width="3.3" height="0.75" fill="#a8a8a8"/><rect x="44.63" y="26.1" width="1.72" height="0.75" fill="#a8a8a8"/><rect x="47.06" y="26.1" width="2.97" height="0.75" fill="#a8a8a8"/><rect x="50.73" y="26.1" width="3.63" height="0.75" fill="#a8a8a8"/><rect x="15.6" y="27.9" width="3.89" height="0.75" fill="#a8a8a8"/><rect x="20.19" y="27.9" width="3.47" height="0.75" fill="#a8a8a8"/><rect x="24.36" y="27.9" width="3.87" height="0.75" fill="#a8a8a8"/><rect x="28.93" y="27.9" width="2.38" height="0.75" fill="#a8a8a8"/><rect x="32.0" y="27.9" width="2.25" height="0.75" fill="#a8a8a8"/><rect x="34.95" y="27.9" width="2.13" height="0.75" fill="#a8a8a8"/><rect x="37.79" y="27.9" width="3.61" height="0.75" fill="#a8a8a8"/><rect x="42.09" y="27.9" width="2.39" height="0.75" fill="#a8a8a8"/><rect x="45.18" y="27.9" width="3.05" height="0.75" fill="#a8a8a8"/><rect x="48.93" y="27.9" width="4.2" height="0.75" fill="#a8a8a8"/><rect x="53.82" y="27.9" width="2.4" height="0.75" fill="#a8a8a8"/><rect x="56.93" y="27.9" width="2.27" height="0.75" fill="#a8a8a8"/><rect x="15.6" y="31.8" width="2.76" height="0.95" fill="#6e6e6e"/><rect x="19.06" y="31.8" width="1.65" height="0.95" fill="#6e6e6e"/><rect x="21.41" y="31.8" width="2.8" height="0.95" fill="#6e6e6e"/><rect x="24.9" y="31.8" width="2.03" height="0.95" fill="#6e6e6e"/><rect x="27.63" y="31.8" width="2.7" height="0.95" fill="#6e6e6e"/><rect x="31.03" y="31.8" width="1.78" height="0.95" fill="#6e6e6e"/><rect x="33.51" y="31.8" width="1.9" height="0.95" fill="#6e6e6e"/><rect x="36.11" y="31.8" width="1.78" height="0.95" fill="#6e6e6e"/><rect x="38.58" y="31.8" width="3.38" height="0.95" fill="#6e6e6e"/><rect x="42.67" y="31.8" width="3.32" height="0.95" fill="#6e6e6e"/><rect x="46.69" y="31.8" width="2.14" height="0.95" fill="#6e6e6e"/><rect x="49.52" y="31.8" width="3.77" height="0.95" fill="#6e6e6e"/><rect x="53.99" y="31.8" width="2.19" height="0.95" fill="#6e6e6e"/><rect x="15.6" y="33.9" width="2.28" height="0.95" fill="#6e6e6e"/><rect x="18.58" y="33.9" width="2.04" height="0.95" fill="#6e6e6e"/><rect x="21.32" y="33.9" width="3.67" height="0.95" fill="#6e6e6e"/><rect x="25.69" y="33.9" width="2.09" height="0.95" fill="#6e6e6e"/><rect x="28.48" y="33.9" width="3.15" height="0.95" fill="#6e6e6e"/><rect x="32.32" y="33.9" width="2.71" height="0.95" fill="#6e6e6e"/><rect x="35.73" y="33.9" width="3.13" height="0.95" fill="#6e6e6e"/><rect x="39.55" y="33.9" width="4.06" height="0.95" fill="#6e6e6e"/><rect x="44.31" y="33.9" width="1.77" height="0.95" fill="#6e6e6e"/><rect x="46.78" y="33.9" width="2.02" height="0.95" fill="#6e6e6e"/><rect x="49.5" y="33.9" width="2.41" height="0.95" fill="#6e6e6e"/><rect x="52.62" y="33.9" width="1.58" height="0.95" fill="#6e6e6e"/><rect x="15.6" y="36.2" width="3.97" height="0.85" fill="#909090"/><rect x="20.27" y="36.2" width="1.78" height="0.85" fill="#909090"/><rect x="22.75" y="36.2" width="3.74" height="0.85" fill="#909090"/><rect x="15.6" y="38.6" width="2.0" height="0.85" fill="#909090"/><rect x="18.3" y="38.6" width="2.04" height="0.85" fill="#909090"/><rect x="21.04" y="38.6" width="2.34" height="0.85" fill="#909090"/><rect x="24.08" y="38.6" width="3.97" height="0.85" fill="#909090"/><rect x="28.75" y="38.6" width="1.68" height="0.85" fill="#909090"/><rect x="31.12" y="38.6" width="1.77" height="0.85" fill="#909090"/><rect x="33.59" y="38.6" width="2.28" height="0.85" fill="#909090"/><rect x="36.57" y="38.6" width="3.6" height="0.85" fill="#909090"/><rect x="40.87" y="38.6" width="2.16" height="0.85" fill="#909090"/><rect x="43.73" y="38.6" width="3.92" height="0.85" fill="#909090"/><rect x="48.34" y="38.6" width="3.6" height="0.85" fill="#909090"/><rect x="52.65" y="38.6" width="2.95" height="0.85" fill="#909090"/><rect x="15.6" y="40.8" width="2.09" height="0.85" fill="#909090"/><rect x="18.39" y="40.8" width="4.18" height="0.85" fill="#909090"/><rect x="23.27" y="40.8" width="3.6" height="0.85" fill="#909090"/><rect x="27.58" y="40.8" width="3.02" height="0.85" fill="#909090"/><rect x="31.3" y="40.8" width="2.62" height="0.85" fill="#909090"/><rect x="34.61" y="40.8" width="1.99" height="0.85" fill="#909090"/><rect x="15.6" y="43" width="2.49" height="0.75" fill="#8c8c8c"/><rect x="18.79" y="43" width="2.25" height="0.75" fill="#8c8c8c"/><rect x="21.74" y="43" width="2.73" height="0.75" fill="#8c8c8c"/><rect x="25.17" y="43" width="3.08" height="0.75" fill="#8c8c8c"/><rect x="28.95" y="43" width="2.67" height="0.75" fill="#8c8c8c"/><rect x="32.31" y="43" width="3.24" height="0.75" fill="#8c8c8c"/><rect x="36.25" y="43" width="3.65" height="0.75" fill="#8c8c8c"/><rect x="40.6" y="43" width="3.35" height="0.75" fill="#8c8c8c"/><rect x="44.66" y="43" width="2.93" height="0.75" fill="#8c8c8c"/><rect x="48.29" y="43" width="1.81" height="0.75" fill="#8c8c8c"/><rect x="15.6" y="45.4" width="3.94" height="1.05" fill="#6e6e6e"/><rect x="20.24" y="45.4" width="2.86" height="1.05" fill="#6e6e6e"/><rect x="23.8" y="45.4" width="2.28" height="1.05" fill="#6e6e6e"/><rect x="26.78" y="45.4" width="3.35" height="1.05" fill="#6e6e6e"/><rect x="30.83" y="45.4" width="2.14" height="1.05" fill="#6e6e6e"/><rect x="33.67" y="45.4" width="2.86" height="1.05" fill="#6e6e6e"/><rect x="37.23" y="45.4" width="3.62" height="1.05" fill="#6e6e6e"/><rect x="41.55" y="45.4" width="2.48" height="1.05" fill="#6e6e6e"/><rect x="44.73" y="45.4" width="1.72" height="1.05" fill="#6e6e6e"/><rect x="47.15" y="45.4" width="2.81" height="1.05" fill="#6e6e6e"/><rect x="50.67" y="45.4" width="3.69" height="1.05" fill="#6e6e6e"/><rect x="55.05" y="45.4" width="3.39" height="1.05" fill="#6e6e6e"/><rect x="15.6" y="47.6" width="3.85" height="0.55" fill="#b8b8b8"/><rect x="20.15" y="47.6" width="3.84" height="0.55" fill="#b8b8b8"/><rect x="24.69" y="47.6" width="3.34" height="0.55" fill="#b8b8b8"/><rect x="28.73" y="47.6" width="2.87" height="0.55" fill="#b8b8b8"/><rect x="15.6" y="49.9" width="3.67" height="0.85" fill="#858585"/><rect x="19.97" y="49.9" width="3.89" height="0.85" fill="#858585"/><rect x="24.56" y="49.9" width="3.97" height="0.85" fill="#858585"/><rect x="29.23" y="49.9" width="3.29" height="0.85" fill="#858585"/><rect x="33.22" y="49.9" width="4.12" height="0.85" fill="#858585"/><rect x="38.03" y="49.9" width="3.22" height="0.85" fill="#858585"/><rect x="41.96" y="49.9" width="3.37" height="0.85" fill="#858585"/><rect x="46.03" y="49.9" width="2.38" height="0.85" fill="#858585"/><rect x="49.12" y="49.9" width="3.1" height="0.85" fill="#858585"/><rect x="52.91" y="49.9" width="0.89" height="0.85" fill="#858585"/><rect x="15.6" y="52.1" width="7" height="0.65" fill="#9c9c9c"/><rect x="21.7" y="56.8" width="5.89" height="1.7" fill="#2c50d6"/><rect x="28.29" y="56.8" width="4.64" height="1.7" fill="#2c50d6"/><rect x="33.64" y="56.8" width="3.74" height="1.7" fill="#2c50d6"/><rect x="38.08" y="56.8" width="5.37" height="1.7" fill="#2c50d6"/><rect x="44.15" y="56.8" width="3.38" height="1.7" fill="#2c50d6"/><rect x="48.23" y="56.8" width="3.03" height="1.7" fill="#2c50d6"/><rect x="51.96" y="56.8" width="1.94" height="1.7" fill="#2c50d6"/><rect x="21.7" y="59" width="32.2" height="0.5" fill="#2c50d6"/><rect x="12.1" y="68" width="51" height="5" fill="#7b8ccf"/><rect x="17.2" y="69.8" width="7.78" height="1.8" fill="#f0f2fb"/><rect x="25.68" y="69.8" width="4.95" height="1.8" fill="#f0f2fb"/><rect x="31.32" y="69.8" width="3.3" height="1.8" fill="#f0f2fb"/><rect x="35.33" y="69.8" width="7.98" height="1.8" fill="#f0f2fb"/><rect x="44.0" y="69.8" width="6.15" height="1.8" fill="#f0f2fb"/><rect x="50.85" y="69.8" width="6.23" height="1.8" fill="#f0f2fb"/></svg></div>
<div class="abtn" style="left:1768px;top:695.70px;width:33px;background:#3ec9d6"></div>
<i class="ic" style="left:1777.65px;top:705.00px"><svg width="14" height="14" viewBox="0 0 24 24" fill="none" stroke="#fff" stroke-width="2.1" stroke-linecap="round" stroke-linejoin="round"><path d="M4 20h4l10.5 -10.5a1.5 1.5 0 0 0 -4 -4l-10.5 10.5v4 M13.5 6.5l4 4"/></svg></i>
<div class="abtn" style="left:1809px;top:695.70px;width:32px;background:#ff3a6e"></div>
<i class="ic" style="left:1818.00px;top:704.70px"><svg width="14" height="14" viewBox="0 0 24 24" fill="none" stroke="#fff" stroke-width="2.1" stroke-linecap="round" stroke-linejoin="round"><path d="M4 7l16 0 M10 11l0 6 M14 11l0 6 M5 7l1 12a2 2 0 0 0 2 2h8a2 2 0 0 0 2 -2l1 -12 M9 7v-3a1 1 0 0 1 1 -1h4a1 1 0 0 1 1 1v3"/></svg></i>
<div class="rb" style="top:867.00px"></div>
<span class="x " style="left:335.00px;top:806.15px;font-size:14px;letter-spacing:0.219px;color:#293240;">5</span>
<span class="x " style="left:397.00px;top:806.15px;font-size:14px;letter-spacing:0.297px;color:#293240;">Standardized tests</span>
<span class="x " style="left:589.00px;top:806.15px;font-size:14px;letter-spacing:-1.297px;color:#293240;">C</span>
<span class="x " style="left:699.00px;top:806.15px;font-size:14px;letter-spacing:-0.260px;color:#293240;">Class 3</span>
<span class="x " style="left:854.00px;top:806.15px;font-size:14px;letter-spacing:0.438px;color:#293240;">38</span>
<span class="x " style="left:1037.00px;top:806.15px;font-size:14px;letter-spacing:0.328px;color:#293240;">100</span>
<span class="x " style="left:1204.00px;top:806.15px;font-size:14px;letter-spacing:0.160px;color:#293240;">01-04-2024</span>
<span class="x " style="left:1402.00px;top:806.15px;font-size:14px;letter-spacing:0.160px;color:#293240;">15-04-2024</span>
<div class="thumb" style="top:775.60px"><svg width="76" height="76" viewBox="0 0 76 76"><rect x="1.2" y="17.2" width="73.7" height="6" fill="#8faadc"/><rect x="5" y="20" width="6.2" height="0.9" fill="#4a5a85"/><rect x="22.1" y="20" width="3.3" height="0.9" fill="#4a5a85"/><rect x="45.3" y="20" width="3.7" height="0.9" fill="#4a5a85"/><rect x="64.9" y="18.9" width="6.5" height="0.8" fill="#4a5a85"/><rect x="64.9" y="21.3" width="6.5" height="1" fill="#4a5a85"/><rect x="1.2" y="17.2" width="73.7" height="39.6" fill="none" stroke="#999" stroke-width=".4"/><rect x="15.4" y="17.2" width="0.4" height="39.6" fill="#999"/><rect x="31.3" y="17.2" width="0.4" height="39.6" fill="#999"/><rect x="62.3" y="17.2" width="0.4" height="39.6" fill="#999"/><rect x="15.6" y="39.4" width="15.9" height="0.45" fill="#888"/><rect x="31.5" y="25.75" width="43.4" height="0.4" fill="#b0b0b0"/><rect x="31.5" y="28.55" width="43.4" height="0.65" fill="#666"/><rect x="31.5" y="31.35" width="43.4" height="0.65" fill="#666"/><rect x="31.5" y="34.15" width="43.4" height="0.4" fill="#b0b0b0"/><rect x="31.5" y="36.95" width="43.4" height="0.4" fill="#b0b0b0"/><rect x="31.5" y="39.75" width="43.4" height="0.4" fill="#b0b0b0"/><rect x="31.5" y="42.55" width="43.4" height="0.65" fill="#666"/><rect x="31.5" y="45.35" width="43.4" height="0.65" fill="#666"/><rect x="31.5" y="48.15" width="43.4" height="0.4" fill="#b0b0b0"/><rect x="31.5" y="50.95" width="43.4" height="0.4" fill="#b0b0b0"/><rect x="31.5" y="53.75" width="43.4" height="0.65" fill="#666"/><rect x="37.0" y="24.2" width="3.06" height="0.8" fill="#6e6e6e"/><rect x="40.61" y="24.2" width="2.35" height="0.8" fill="#6e6e6e"/><rect x="43.51" y="24.2" width="2.35" height="0.8" fill="#6e6e6e"/><rect x="46.41" y="24.2" width="2.53" height="0.8" fill="#6e6e6e"/><rect x="49.49" y="24.2" width="3.19" height="0.8" fill="#6e6e6e"/><rect x="53.23" y="24.2" width="2.53" height="0.8" fill="#6e6e6e"/><rect x="56.31" y="24.2" width="0.69" height="0.8" fill="#6e6e6e"/><rect x="68.3" y="24.2" width="0.7" height="0.8" fill="#666"/><rect x="36.0" y="27.0" width="2.05" height="0.8" fill="#6e6e6e"/><rect x="38.6" y="27.0" width="2.73" height="0.8" fill="#6e6e6e"/><rect x="41.88" y="27.0" width="1.67" height="0.8" fill="#6e6e6e"/><rect x="44.1" y="27.0" width="3.4" height="0.8" fill="#6e6e6e"/><rect x="48.06" y="27.0" width="3.76" height="0.8" fill="#6e6e6e"/><rect x="52.36" y="27.0" width="1.78" height="0.8" fill="#6e6e6e"/><rect x="54.69" y="27.0" width="3.31" height="0.8" fill="#6e6e6e"/><rect x="68.3" y="27.0" width="0.7" height="0.8" fill="#666"/><rect x="34.5" y="29.8" width="3.26" height="0.8" fill="#6e6e6e"/><rect x="38.31" y="29.8" width="2.75" height="0.8" fill="#6e6e6e"/><rect x="41.61" y="29.8" width="3.97" height="0.8" fill="#6e6e6e"/><rect x="46.13" y="29.8" width="2.53" height="0.8" fill="#6e6e6e"/><rect x="49.22" y="29.8" width="1.98" height="0.8" fill="#6e6e6e"/><rect x="51.74" y="29.8" width="3.28" height="0.8" fill="#6e6e6e"/><rect x="55.57" y="29.8" width="2.51" height="0.8" fill="#6e6e6e"/><rect x="58.62" y="29.8" width="0.88" height="0.8" fill="#6e6e6e"/><rect x="68.3" y="29.8" width="0.7" height="0.8" fill="#666"/><rect x="43.5" y="32.6" width="4.0" height="0.8" fill="#6e6e6e"/><rect x="48.05" y="32.6" width="1.75" height="0.8" fill="#6e6e6e"/><rect x="68.3" y="32.6" width="0.7" height="0.8" fill="#666"/><rect x="36.0" y="35.4" width="2.21" height="0.8" fill="#6e6e6e"/><rect x="38.76" y="35.4" width="3.06" height="0.8" fill="#6e6e6e"/><rect x="42.37" y="35.4" width="1.79" height="0.8" fill="#6e6e6e"/><rect x="44.71" y="35.4" width="3.86" height="0.8" fill="#6e6e6e"/><rect x="49.11" y="35.4" width="2.85" height="0.8" fill="#6e6e6e"/><rect x="52.52" y="35.4" width="3.22" height="0.8" fill="#6e6e6e"/><rect x="56.29" y="35.4" width="1.71" height="0.8" fill="#6e6e6e"/><rect x="68.3" y="35.4" width="0.7" height="0.8" fill="#666"/><rect x="41.0" y="38.2" width="2.92" height="0.8" fill="#6e6e6e"/><rect x="44.47" y="38.2" width="2.67" height="0.8" fill="#6e6e6e"/><rect x="47.69" y="38.2" width="2.23" height="0.8" fill="#6e6e6e"/><rect x="50.47" y="38.2" width="2.53" height="0.8" fill="#6e6e6e"/><rect x="68.3" y="38.2" width="0.7" height="0.8" fill="#666"/><rect x="40.0" y="41.0" width="3.46" height="0.8" fill="#6e6e6e"/><rect x="44.01" y="41.0" width="2.45" height="0.8" fill="#6e6e6e"/><rect x="47.02" y="41.0" width="1.55" height="0.8" fill="#6e6e6e"/><rect x="49.12" y="41.0" width="2.35" height="0.8" fill="#6e6e6e"/><rect x="52.02" y="41.0" width="1.98" height="0.8" fill="#6e6e6e"/><rect x="68.3" y="41.0" width="0.7" height="0.8" fill="#666"/><rect x="43.0" y="43.8" width="1.53" height="0.8" fill="#6e6e6e"/><rect x="45.08" y="43.8" width="3.33" height="0.8" fill="#6e6e6e"/><rect x="48.96" y="43.8" width="1.6" height="0.8" fill="#6e6e6e"/><rect x="68.3" y="43.8" width="0.7" height="0.8" fill="#666"/><rect x="39.0" y="46.6" width="2.65" height="0.8" fill="#6e6e6e"/><rect x="42.2" y="46.6" width="3.48" height="0.8" fill="#6e6e6e"/><rect x="46.24" y="46.6" width="3.97" height="0.8" fill="#6e6e6e"/><rect x="50.75" y="46.6" width="3.08" height="0.8" fill="#6e6e6e"/><rect x="54.39" y="46.6" width="0.61" height="0.8" fill="#6e6e6e"/><rect x="68.3" y="46.6" width="0.7" height="0.8" fill="#666"/><rect x="40.5" y="49.4" width="3.07" height="0.8" fill="#6e6e6e"/><rect x="44.12" y="49.4" width="2.06" height="0.8" fill="#6e6e6e"/><rect x="46.73" y="49.4" width="2.45" height="0.8" fill="#6e6e6e"/><rect x="49.73" y="49.4" width="1.69" height="0.8" fill="#6e6e6e"/><rect x="51.97" y="49.4" width="1.53" height="0.8" fill="#6e6e6e"/><rect x="68.3" y="49.4" width="0.7" height="0.8" fill="#666"/><rect x="42.5" y="52.2" width="3.66" height="0.8" fill="#6e6e6e"/><rect x="46.71" y="52.2" width="1.64" height="0.8" fill="#6e6e6e"/><rect x="48.91" y="52.2" width="2.27" height="0.8" fill="#6e6e6e"/><rect x="68.3" y="52.2" width="0.7" height="0.8" fill="#666"/><rect x="42.0" y="55.0" width="2.79" height="0.8" fill="#6e6e6e"/><rect x="45.34" y="55.0" width="1.81" height="0.8" fill="#6e6e6e"/><rect x="47.69" y="55.0" width="3.78" height="0.8" fill="#6e6e6e"/><rect x="68.3" y="55.0" width="0.7" height="0.8" fill="#666"/><rect x="5.2" y="38.2" width="2.47" height="0.9" fill="#666"/><rect x="8.37" y="38.2" width="2.43" height="0.9" fill="#666"/><rect x="4.2" y="40.5" width="3.31" height="0.9" fill="#666"/><rect x="8.21" y="40.5" width="2.81" height="0.9" fill="#666"/><rect x="17.2" y="31.2" width="2.88" height="0.9" fill="#555"/><rect x="20.58" y="31.2" width="4.05" height="0.9" fill="#555"/><rect x="25.13" y="31.2" width="3.88" height="0.9" fill="#555"/><rect x="18.9" y="46.8" width="3.03" height="0.9" fill="#777"/><rect x="22.63" y="46.8" width="1.91" height="0.9" fill="#777"/><rect x="25.25" y="46.8" width="2.88" height="0.9" fill="#777"/><rect x="19.6" y="49" width="1.67" height="0.9" fill="#777"/><rect x="21.97" y="49" width="2.61" height="0.9" fill="#777"/><rect x="25.28" y="49" width="2.32" height="0.9" fill="#777"/></svg></div>
<div class="abtn" style="left:1768px;top:800.10px;width:33px;background:#3ec9d6"></div>
<i class="ic" style="left:1777.65px;top:809.40px"><svg width="14" height="14" viewBox="0 0 24 24" fill="none" stroke="#fff" stroke-width="2.1" stroke-linecap="round" stroke-linejoin="round"><path d="M4 20h4l10.5 -10.5a1.5 1.5 0 0 0 -4 -4l-10.5 10.5v4 M13.5 6.5l4 4"/></svg></i>
<div class="abtn" style="left:1809px;top:800.10px;width:32px;background:#ff3a6e"></div>
<i class="ic" style="left:1818.00px;top:809.10px"><svg width="14" height="14" viewBox="0 0 24 24" fill="none" stroke="#fff" stroke-width="2.1" stroke-linecap="round" stroke-linejoin="round"><path d="M4 7l16 0 M10 11l0 6 M14 11l0 6 M5 7l1 12a2 2 0 0 0 2 2h8a2 2 0 0 0 2 -2l1 -12 M9 7v-3a1 1 0 0 1 1 -1h4a1 1 0 0 1 1 1v3"/></svg></i>
<div class="rb" style="top:971.40px"></div>
<span class="x " style="left:335.00px;top:910.15px;font-size:14px;letter-spacing:0.219px;color:#293240;">6</span>
<span class="x " style="left:397.00px;top:910.15px;font-size:14px;letter-spacing:0.078px;color:#293240;">Final</span>
<span class="x " style="left:589.00px;top:910.15px;font-size:14px;letter-spacing:-0.297px;color:#293240;">B</span>
<span class="x " style="left:699.00px;top:910.15px;font-size:14px;letter-spacing:-0.260px;color:#293240;">Class 2</span>
<span class="x " style="left:854.00px;top:910.15px;font-size:14px;letter-spacing:0.438px;color:#293240;">29</span>
<span class="x " style="left:1037.00px;top:910.15px;font-size:14px;letter-spacing:0.438px;color:#293240;">70</span>
<span class="x " style="left:1204.00px;top:910.15px;font-size:14px;letter-spacing:0.160px;color:#293240;">31-03-2024</span>
<span class="x " style="left:1402.00px;top:910.15px;font-size:14px;letter-spacing:0.160px;color:#293240;">27-04-2024</span>
<div class="thumb" style="top:880.00px"><svg width="76" height="76" viewBox="0 0 76 76"><rect x="0.9" y="15.8" width="74.2" height="3.3" fill="#21fb21"/><rect x="5.8" y="16.4" width="5.3" height="2.5" fill="#1c2f8f" rx="1"/><rect x="11.1" y="15" width="3.7" height="3.9" fill="#f4d23c" rx="1"/><rect x="65.7" y="15.9" width="2.6" height="3" fill="#2a3c9a" rx="1"/><rect x="67.8" y="15.4" width="3.2" height="3.5" fill="#f4d23c" rx="1"/><rect x="27" y="17.3" width="3.08" height="1.3" fill="#0f7a14"/><rect x="30.58" y="17.3" width="2.27" height="1.3" fill="#0f7a14"/><rect x="33.35" y="17.3" width="2.44" height="1.3" fill="#0f7a14"/><rect x="36.29" y="17.3" width="4.13" height="1.3" fill="#0f7a14"/><rect x="40.92" y="17.3" width="2.41" height="1.3" fill="#0f7a14"/><rect x="43.83" y="17.3" width="3.66" height="1.3" fill="#0f7a14"/><rect x="47.99" y="17.3" width="0.61" height="1.3" fill="#0f7a14"/><rect x="1.2" y="20" width="9.6" height="0.9" fill="#4a4a4a"/><rect x="21" y="20" width="3" height="0.9" fill="#4a4a4a"/><rect x="35" y="20" width="2.4" height="0.9" fill="#4a4a4a"/><rect x="42.5" y="20" width="3.5" height="0.9" fill="#4a4a4a"/><rect x="50.5" y="20" width="5" height="0.9" fill="#4a4a4a"/><rect x="56.5" y="20" width="4" height="0.9" fill="#4a4a4a"/><rect x="72" y="20" width="2.5" height="0.9" fill="#4a4a4a"/><rect x="1" y="23.0" width="74" height="0.3" fill="#dcdcdc"/><rect x="1" y="24.72" width="74" height="0.3" fill="#dcdcdc"/><rect x="1" y="26.44" width="74" height="0.3" fill="#dcdcdc"/><rect x="1" y="28.16" width="74" height="0.3" fill="#dcdcdc"/><rect x="1" y="29.88" width="74" height="0.3" fill="#dcdcdc"/><rect x="1" y="31.6" width="74" height="0.3" fill="#dcdcdc"/><rect x="1" y="33.32" width="74" height="0.3" fill="#dcdcdc"/><rect x="1" y="35.04" width="74" height="0.3" fill="#dcdcdc"/><rect x="1" y="36.76" width="74" height="0.3" fill="#dcdcdc"/><rect x="1" y="38.48" width="74" height="0.3" fill="#dcdcdc"/><rect x="1" y="40.2" width="74" height="0.3" fill="#dcdcdc"/><rect x="1" y="41.92" width="74" height="0.3" fill="#dcdcdc"/><rect x="1" y="43.64" width="74" height="0.3" fill="#dcdcdc"/><rect x="1" y="45.36" width="74" height="0.3" fill="#dcdcdc"/><rect x="1" y="47.08" width="74" height="0.3" fill="#dcdcdc"/><rect x="1" y="48.8" width="74" height="0.3" fill="#dcdcdc"/><rect x="1" y="50.52" width="74" height="0.3" fill="#dcdcdc"/><rect x="1" y="52.24" width="74" height="0.3" fill="#dcdcdc"/><rect x="42" y="53.96" width="33" height="0.3" fill="#dcdcdc"/><rect x="42" y="55.68" width="33" height="0.3" fill="#dcdcdc"/><rect x="42" y="57.4" width="33" height="0.3" fill="#dcdcdc"/><rect x="42" y="59.12" width="33" height="0.3" fill="#dcdcdc"/><rect x="42" y="60.84" width="33" height="0.3" fill="#dcdcdc"/><rect x="1" y="24.3" width="74" height="0.5" fill="#9a9a9a"/><rect x="1" y="31.5" width="74" height="0.5" fill="#9a9a9a"/><rect x="1" y="38.4" width="74" height="0.5" fill="#9a9a9a"/><rect x="1" y="45.3" width="74" height="0.5" fill="#9a9a9a"/><rect x="1" y="48.4" width="74" height="0.5" fill="#9a9a9a"/><rect x="1.6" y="21.95" width="3.0" height="0.7" fill="#777"/><rect x="5.4" y="21.95" width="3.35" height="0.7" fill="#777"/><rect x="12.6" y="21.95" width="2.36" height="0.7" fill="#707070"/><rect x="15.46" y="21.95" width="2.45" height="0.7" fill="#707070"/><rect x="18.41" y="21.95" width="2.37" height="0.7" fill="#707070"/><rect x="35.3" y="21.95" width="1.23" height="0.7" fill="#888"/><rect x="42.6" y="21.95" width="1.97" height="0.7" fill="#777"/><rect x="50.4" y="21.95" width="3.96" height="0.7" fill="#6a6a6a"/><rect x="56.8" y="21.95" width="2.3" height="0.7" fill="#6a6a6a"/><rect x="59.6" y="21.95" width="2.57" height="0.7" fill="#6a6a6a"/><rect x="62.67" y="21.95" width="1.76" height="0.7" fill="#6a6a6a"/><rect x="64.93" y="21.95" width="1.03" height="0.7" fill="#6a6a6a"/><rect x="72.3" y="21.95" width="0.98" height="0.7" fill="#999"/><rect x="1.6" y="23.67" width="2.38" height="0.7" fill="#777"/><rect x="5.4" y="23.67" width="2.26" height="0.7" fill="#777"/><rect x="12.6" y="23.67" width="2.27" height="0.7" fill="#707070"/><rect x="15.37" y="23.67" width="1.59" height="0.7" fill="#707070"/><rect x="17.47" y="23.67" width="1.01" height="0.7" fill="#707070"/><rect x="35.3" y="23.67" width="1.33" height="0.7" fill="#888"/><rect x="42.6" y="23.67" width="2.53" height="0.7" fill="#777"/><rect x="50.4" y="23.67" width="2.38" height="0.7" fill="#6a6a6a"/><rect x="56.8" y="23.67" width="2.19" height="0.7" fill="#6a6a6a"/><rect x="59.49" y="23.67" width="1.58" height="0.7" fill="#6a6a6a"/><rect x="61.58" y="23.67" width="1.38" height="0.7" fill="#6a6a6a"/><rect x="72.3" y="23.67" width="0.99" height="0.7" fill="#999"/><rect x="1.6" y="25.39" width="2.98" height="0.7" fill="#777"/><rect x="5.4" y="25.39" width="2.49" height="0.7" fill="#777"/><rect x="12.6" y="25.39" width="2.47" height="0.7" fill="#707070"/><rect x="15.57" y="25.39" width="2.98" height="0.7" fill="#707070"/><rect x="19.05" y="25.39" width="1.22" height="0.7" fill="#707070"/><rect x="35.3" y="25.39" width="1.14" height="0.7" fill="#888"/><rect x="42.6" y="25.39" width="2.05" height="0.7" fill="#777"/><rect x="50.4" y="25.39" width="2.9" height="0.7" fill="#6a6a6a"/><rect x="56.8" y="25.39" width="2.17" height="0.7" fill="#6a6a6a"/><rect x="59.47" y="25.39" width="1.41" height="0.7" fill="#6a6a6a"/><rect x="61.38" y="25.39" width="2.46" height="0.7" fill="#6a6a6a"/><rect x="64.33" y="25.39" width="1.81" height="0.7" fill="#6a6a6a"/><rect x="72.3" y="25.39" width="1.06" height="0.7" fill="#999"/><rect x="1.6" y="27.11" width="2.44" height="0.7" fill="#777"/><rect x="5.4" y="27.11" width="2.23" height="0.7" fill="#777"/><rect x="12.6" y="27.11" width="2.42" height="0.7" fill="#707070"/><rect x="15.52" y="27.11" width="2.97" height="0.7" fill="#707070"/><rect x="18.99" y="27.11" width="0.84" height="0.7" fill="#707070"/><rect x="35.3" y="27.11" width="1.27" height="0.7" fill="#888"/><rect x="42.6" y="27.11" width="2.03" height="0.7" fill="#777"/><rect x="50.4" y="27.11" width="2.1" height="0.7" fill="#6a6a6a"/><rect x="56.8" y="27.11" width="1.83" height="0.7" fill="#6a6a6a"/><rect x="59.13" y="27.11" width="1.92" height="0.7" fill="#6a6a6a"/><rect x="61.55" y="27.11" width="0.85" height="0.7" fill="#6a6a6a"/><rect x="72.3" y="27.11" width="1.04" height="0.7" fill="#999"/><rect x="1.6" y="28.83" width="2.88" height="0.7" fill="#777"/><rect x="5.4" y="28.83" width="3.83" height="0.7" fill="#777"/><rect x="12.6" y="28.83" width="2.51" height="0.7" fill="#707070"/><rect x="15.61" y="28.83" width="1.61" height="0.7" fill="#707070"/><rect x="17.72" y="28.83" width="1.59" height="0.7" fill="#707070"/><rect x="19.81" y="28.83" width="1.13" height="0.7" fill="#707070"/><rect x="35.3" y="28.83" width="1.19" height="0.7" fill="#888"/><rect x="42.6" y="28.83" width="2.3" height="0.7" fill="#777"/><rect x="50.4" y="28.83" width="2.4" height="0.7" fill="#6a6a6a"/><rect x="56.8" y="28.83" width="1.57" height="0.7" fill="#6a6a6a"/><rect x="58.87" y="28.83" width="1.66" height="0.7" fill="#6a6a6a"/><rect x="61.03" y="28.83" width="1.92" height="0.7" fill="#6a6a6a"/><rect x="63.45" y="28.83" width="1.93" height="0.7" fill="#6a6a6a"/><rect x="72.3" y="28.83" width="0.94" height="0.7" fill="#999"/><rect x="1.6" y="30.55" width="2.75" height="0.7" fill="#777"/><rect x="5.4" y="30.55" width="2.38" height="0.7" fill="#777"/><rect x="12.6" y="30.55" width="2.14" height="0.7" fill="#707070"/><rect x="15.24" y="30.55" width="2.69" height="0.7" fill="#707070"/><rect x="18.43" y="30.55" width="1.67" height="0.7" fill="#707070"/><rect x="35.3" y="30.55" width="1.1" height="0.7" fill="#888"/><rect x="42.6" y="30.55" width="2.24" height="0.7" fill="#777"/><rect x="50.4" y="30.55" width="2.3" height="0.7" fill="#6a6a6a"/><rect x="56.8" y="30.55" width="2.73" height="0.7" fill="#6a6a6a"/><rect x="60.03" y="30.55" width="2.34" height="0.7" fill="#6a6a6a"/><rect x="72.3" y="30.55" width="1.13" height="0.7" fill="#999"/><rect x="1.6" y="32.27" width="2.95" height="0.7" fill="#777"/><rect x="5.4" y="32.27" width="2.63" height="0.7" fill="#777"/><rect x="12.6" y="32.27" width="1.91" height="0.7" fill="#707070"/><rect x="15.01" y="32.27" width="1.46" height="0.7" fill="#707070"/><rect x="16.97" y="32.27" width="1.72" height="0.7" fill="#707070"/><rect x="19.19" y="32.27" width="1.24" height="0.7" fill="#707070"/><rect x="35.3" y="32.27" width="1.16" height="0.7" fill="#888"/><rect x="42.6" y="32.27" width="2.03" height="0.7" fill="#777"/><rect x="50.4" y="32.27" width="2.6" height="0.7" fill="#6a6a6a"/><rect x="56.8" y="32.27" width="2.05" height="0.7" fill="#6a6a6a"/><rect x="59.35" y="32.27" width="2.07" height="0.7" fill="#6a6a6a"/><rect x="61.92" y="32.27" width="2.52" height="0.7" fill="#6a6a6a"/><rect x="64.95" y="32.27" width="1.68" height="0.7" fill="#6a6a6a"/><rect x="72.3" y="32.27" width="1.0" height="0.7" fill="#999"/><rect x="1.6" y="33.99" width="2.85" height="0.7" fill="#777"/><rect x="5.4" y="33.99" width="4.14" height="0.7" fill="#777"/><rect x="12.6" y="33.99" width="2.48" height="0.7" fill="#707070"/><rect x="15.58" y="33.99" width="1.23" height="0.7" fill="#707070"/><rect x="35.3" y="33.99" width="1.33" height="0.7" fill="#888"/><rect x="42.6" y="33.99" width="1.97" height="0.7" fill="#777"/><rect x="50.4" y="33.99" width="2.34" height="0.7" fill="#6a6a6a"/><rect x="56.8" y="33.99" width="1.63" height="0.7" fill="#6a6a6a"/><rect x="58.93" y="33.99" width="1.2" height="0.7" fill="#6a6a6a"/><rect x="60.63" y="33.99" width="2.27" height="0.7" fill="#6a6a6a"/><rect x="63.4" y="33.99" width="2.26" height="0.7" fill="#6a6a6a"/><rect x="66.16" y="33.99" width="0.68" height="0.7" fill="#6a6a6a"/><rect x="72.3" y="33.99" width="1.04" height="0.7" fill="#999"/><rect x="1.6" y="35.71" width="2.58" height="0.7" fill="#777"/><rect x="5.4" y="35.71" width="3.25" height="0.7" fill="#777"/><rect x="12.6" y="35.71" width="2.2" height="0.7" fill="#707070"/><rect x="15.3" y="35.71" width="2.64" height="0.7" fill="#707070"/><rect x="35.3" y="35.71" width="1.3" height="0.7" fill="#888"/><rect x="42.6" y="35.71" width="2.32" height="0.7" fill="#777"/><rect x="50.4" y="35.71" width="3.07" height="0.7" fill="#6a6a6a"/><rect x="56.8" y="35.71" width="2.66" height="0.7" fill="#6a6a6a"/><rect x="59.96" y="35.71" width="2.98" height="0.7" fill="#6a6a6a"/><rect x="63.43" y="35.71" width="1.07" height="0.7" fill="#6a6a6a"/><rect x="72.3" y="35.71" width="1.17" height="0.7" fill="#999"/><rect x="1.6" y="37.43" width="2.76" height="0.7" fill="#777"/><rect x="5.4" y="37.43" width="3.35" height="0.7" fill="#777"/><rect x="12.6" y="37.43" width="2.39" height="0.7" fill="#707070"/><rect x="15.49" y="37.43" width="1.26" height="0.7" fill="#707070"/><rect x="17.25" y="37.43" width="2.14" height="0.7" fill="#707070"/><rect x="19.89" y="37.43" width="1.42" height="0.7" fill="#707070"/><rect x="35.3" y="37.43" width="1.14" height="0.7" fill="#888"/><rect x="42.6" y="37.43" width="2.31" height="0.7" fill="#777"/><rect x="50.4" y="37.43" width="3.1" height="0.7" fill="#6a6a6a"/><rect x="56.8" y="37.43" width="2.68" height="0.7" fill="#6a6a6a"/><rect x="59.98" y="37.43" width="1.82" height="0.7" fill="#6a6a6a"/><rect x="62.29" y="37.43" width="2.96" height="0.7" fill="#6a6a6a"/><rect x="65.75" y="37.43" width="1.29" height="0.7" fill="#6a6a6a"/><rect x="72.3" y="37.43" width="0.98" height="0.7" fill="#999"/><rect x="1.6" y="39.15" width="2.96" height="0.7" fill="#777"/><rect x="5.4" y="39.15" width="2.4" height="0.7" fill="#777"/><rect x="12.6" y="39.15" width="2.48" height="0.7" fill="#707070"/><rect x="15.58" y="39.15" width="1.45" height="0.7" fill="#707070"/><rect x="17.53" y="39.15" width="1.55" height="0.7" fill="#707070"/><rect x="35.3" y="39.15" width="1.11" height="0.7" fill="#888"/><rect x="42.6" y="39.15" width="2.02" height="0.7" fill="#777"/><rect x="50.4" y="39.15" width="3.92" height="0.7" fill="#6a6a6a"/><rect x="56.8" y="39.15" width="2.12" height="0.7" fill="#6a6a6a"/><rect x="59.42" y="39.15" width="2.59" height="0.7" fill="#6a6a6a"/><rect x="62.51" y="39.15" width="2.09" height="0.7" fill="#6a6a6a"/><rect x="72.3" y="39.15" width="1.09" height="0.7" fill="#999"/><rect x="1.6" y="40.87" width="3.0" height="0.7" fill="#777"/><rect x="5.4" y="40.87" width="2.25" height="0.7" fill="#777"/><rect x="12.6" y="40.87" width="1.71" height="0.7" fill="#707070"/><rect x="14.81" y="40.87" width="1.45" height="0.7" fill="#707070"/><rect x="16.76" y="40.87" width="0.77" height="0.7" fill="#707070"/><rect x="35.3" y="40.87" width="1.32" height="0.7" fill="#888"/><rect x="42.6" y="40.87" width="2.22" height="0.7" fill="#777"/><rect x="50.4" y="40.87" width="2.35" height="0.7" fill="#6a6a6a"/><rect x="56.8" y="40.87" width="1.26" height="0.7" fill="#6a6a6a"/><rect x="58.56" y="40.87" width="2.91" height="0.7" fill="#6a6a6a"/><rect x="61.98" y="40.87" width="0.98" height="0.7" fill="#6a6a6a"/><rect x="72.3" y="40.87" width="1.18" height="0.7" fill="#999"/><rect x="1.6" y="42.59" width="2.7" height="0.7" fill="#777"/><rect x="5.4" y="42.59" width="2.81" height="0.7" fill="#777"/><rect x="12.6" y="42.59" width="2.42" height="0.7" fill="#707070"/><rect x="15.52" y="42.59" width="2.33" height="0.7" fill="#707070"/><rect x="18.35" y="42.59" width="1.35" height="0.7" fill="#707070"/><rect x="20.21" y="42.59" width="1.77" height="0.7" fill="#707070"/><rect x="35.3" y="42.59" width="1.08" height="0.7" fill="#888"/><rect x="42.6" y="42.59" width="2.07" height="0.7" fill="#777"/><rect x="50.4" y="42.59" width="2.96" height="0.7" fill="#6a6a6a"/><rect x="56.8" y="42.59" width="2.21" height="0.7" fill="#6a6a6a"/><rect x="59.51" y="42.59" width="2.08" height="0.7" fill="#6a6a6a"/><rect x="62.09" y="42.59" width="2.49" height="0.7" fill="#6a6a6a"/><rect x="65.08" y="42.59" width="1.06" height="0.7" fill="#6a6a6a"/><rect x="72.3" y="42.59" width="0.95" height="0.7" fill="#999"/><rect x="1.6" y="44.31" width="2.29" height="0.7" fill="#777"/><rect x="5.4" y="44.31" width="2.67" height="0.7" fill="#777"/><rect x="12.6" y="44.31" width="1.27" height="0.7" fill="#707070"/><rect x="14.37" y="44.31" width="2.42" height="0.7" fill="#707070"/><rect x="35.3" y="44.31" width="1.35" height="0.7" fill="#888"/><rect x="42.6" y="44.31" width="2.46" height="0.7" fill="#777"/><rect x="50.4" y="44.31" width="3.72" height="0.7" fill="#6a6a6a"/><rect x="56.8" y="44.31" width="2.85" height="0.7" fill="#6a6a6a"/><rect x="60.15" y="44.31" width="2.03" height="0.7" fill="#6a6a6a"/><rect x="62.67" y="44.31" width="0.85" height="0.7" fill="#6a6a6a"/><rect x="72.3" y="44.31" width="1.06" height="0.7" fill="#999"/><rect x="1.6" y="46.03" width="2.87" height="0.7" fill="#777"/><rect x="5.4" y="46.03" width="3.72" height="0.7" fill="#777"/><rect x="12.6" y="46.03" width="1.92" height="0.7" fill="#707070"/><rect x="15.02" y="46.03" width="2.58" height="0.7" fill="#707070"/><rect x="18.1" y="46.03" width="2.09" height="0.7" fill="#707070"/><rect x="35.3" y="46.03" width="1.19" height="0.7" fill="#888"/><rect x="42.6" y="46.03" width="2.06" height="0.7" fill="#777"/><rect x="50.4" y="46.03" width="3.9" height="0.7" fill="#6a6a6a"/><rect x="56.8" y="46.03" width="2.61" height="0.7" fill="#6a6a6a"/><rect x="59.91" y="46.03" width="2.37" height="0.7" fill="#6a6a6a"/><rect x="62.78" y="46.03" width="2.73" height="0.7" fill="#6a6a6a"/><rect x="72.3" y="46.03" width="1.17" height="0.7" fill="#999"/><rect x="1.6" y="47.75" width="2.61" height="0.7" fill="#777"/><rect x="5.4" y="47.75" width="3.15" height="0.7" fill="#777"/><rect x="12.6" y="47.75" width="2.88" height="0.7" fill="#707070"/><rect x="15.98" y="47.75" width="1.57" height="0.7" fill="#707070"/><rect x="35.3" y="47.75" width="1.31" height="0.7" fill="#888"/><rect x="42.6" y="47.75" width="2.47" height="0.7" fill="#777"/><rect x="50.4" y="47.75" width="3.41" height="0.7" fill="#6a6a6a"/><rect x="56.8" y="47.75" width="2.29" height="0.7" fill="#6a6a6a"/><rect x="59.59" y="47.75" width="2.29" height="0.7" fill="#6a6a6a"/><rect x="72.3" y="47.75" width="1.11" height="0.7" fill="#999"/><rect x="1.6" y="49.47" width="2.64" height="0.7" fill="#777"/><rect x="5.4" y="49.47" width="4.12" height="0.7" fill="#777"/><rect x="12.6" y="49.47" width="1.67" height="0.7" fill="#707070"/><rect x="14.77" y="49.47" width="2.43" height="0.7" fill="#707070"/><rect x="17.7" y="49.47" width="1.88" height="0.7" fill="#707070"/><rect x="35.3" y="49.47" width="1.09" height="0.7" fill="#888"/><rect x="42.6" y="49.47" width="2.47" height="0.7" fill="#777"/><rect x="50.4" y="49.47" width="2.98" height="0.7" fill="#6a6a6a"/><rect x="56.8" y="49.47" width="1.65" height="0.7" fill="#6a6a6a"/><rect x="58.95" y="49.47" width="2.87" height="0.7" fill="#6a6a6a"/><rect x="62.32" y="49.47" width="2.68" height="0.7" fill="#6a6a6a"/><rect x="65.5" y="49.47" width="1.11" height="0.7" fill="#6a6a6a"/><rect x="72.3" y="49.47" width="1.01" height="0.7" fill="#999"/><rect x="1.6" y="51.19" width="2.78" height="0.7" fill="#777"/><rect x="5.4" y="51.19" width="2.4" height="0.7" fill="#777"/><rect x="12.6" y="51.19" width="2.98" height="0.7" fill="#707070"/><rect x="16.08" y="51.19" width="2.88" height="0.7" fill="#707070"/><rect x="19.46" y="51.19" width="1.53" height="0.7" fill="#707070"/><rect x="35.3" y="51.19" width="1.29" height="0.7" fill="#888"/><rect x="42.6" y="51.19" width="2.31" height="0.7" fill="#777"/><rect x="50.4" y="51.19" width="3.29" height="0.7" fill="#6a6a6a"/><rect x="56.8" y="51.19" width="2.58" height="0.7" fill="#6a6a6a"/><rect x="59.88" y="51.19" width="1.92" height="0.7" fill="#6a6a6a"/><rect x="62.29" y="51.19" width="2.5" height="0.7" fill="#6a6a6a"/><rect x="72.3" y="51.19" width="1.06" height="0.7" fill="#999"/><rect x="42.6" y="52.91" width="2.33" height="0.7" fill="#777"/><rect x="50.4" y="52.91" width="3.8" height="0.7" fill="#6a6a6a"/><rect x="56.8" y="52.91" width="2.28" height="0.7" fill="#6a6a6a"/><rect x="59.58" y="52.91" width="1.75" height="0.7" fill="#6a6a6a"/><rect x="61.83" y="52.91" width="0.84" height="0.7" fill="#6a6a6a"/><rect x="72.3" y="52.91" width="1.19" height="0.7" fill="#999"/><rect x="42.6" y="54.63" width="2.46" height="0.7" fill="#777"/><rect x="50.4" y="54.63" width="2.03" height="0.7" fill="#6a6a6a"/><rect x="56.8" y="54.63" width="2.0" height="0.7" fill="#6a6a6a"/><rect x="59.3" y="54.63" width="1.28" height="0.7" fill="#6a6a6a"/><rect x="61.08" y="54.63" width="1.14" height="0.7" fill="#6a6a6a"/><rect x="72.3" y="54.63" width="1.16" height="0.7" fill="#999"/><rect x="42.6" y="56.35" width="2.48" height="0.7" fill="#777"/><rect x="50.4" y="56.35" width="3.69" height="0.7" fill="#6a6a6a"/><rect x="56.8" y="56.35" width="1.86" height="0.7" fill="#6a6a6a"/><rect x="59.16" y="56.35" width="2.41" height="0.7" fill="#6a6a6a"/><rect x="62.06" y="56.35" width="2.9" height="0.7" fill="#6a6a6a"/><rect x="72.3" y="56.35" width="0.98" height="0.7" fill="#999"/><rect x="42.6" y="58.07" width="2.22" height="0.7" fill="#777"/><rect x="50.4" y="58.07" width="2.23" height="0.7" fill="#6a6a6a"/><rect x="56.8" y="58.07" width="2.18" height="0.7" fill="#6a6a6a"/><rect x="59.48" y="58.07" width="1.49" height="0.7" fill="#6a6a6a"/><rect x="61.48" y="58.07" width="2.71" height="0.7" fill="#6a6a6a"/><rect x="64.69" y="58.07" width="1.96" height="0.7" fill="#6a6a6a"/><rect x="72.3" y="58.07" width="1.07" height="0.7" fill="#999"/><rect x="42.6" y="59.79" width="2.57" height="0.7" fill="#777"/><rect x="50.4" y="59.79" width="3.17" height="0.7" fill="#6a6a6a"/><rect x="56.8" y="59.79" width="2.11" height="0.7" fill="#6a6a6a"/><rect x="59.41" y="59.79" width="1.45" height="0.7" fill="#6a6a6a"/><rect x="61.36" y="59.79" width="2.56" height="0.7" fill="#6a6a6a"/><rect x="72.3" y="59.79" width="1.03" height="0.7" fill="#999"/><rect x="1" y="19.4" width="0.35" height="32.4" fill="#c8c8c8"/><rect x="11.2" y="19.4" width="0.35" height="32.4" fill="#c8c8c8"/><rect x="34.6" y="19.4" width="0.35" height="32.4" fill="#c8c8c8"/><rect x="38.2" y="19.4" width="0.35" height="41.6" fill="#c8c8c8"/><rect x="42" y="19.4" width="0.35" height="41.6" fill="#c8c8c8"/><rect x="49.7" y="19.4" width="0.35" height="41.6" fill="#c8c8c8"/><rect x="55.9" y="19.4" width="0.35" height="41.6" fill="#c8c8c8"/><rect x="71.3" y="19.4" width="0.35" height="41.6" fill="#c8c8c8"/><rect x="74.8" y="19.4" width="0.35" height="41.6" fill="#c8c8c8"/><rect x="1" y="51.6" width="37" height="0.4" fill="#bbb"/><rect x="42" y="61" width="33" height="0.4" fill="#bbb"/><circle cx="37" cy="53.4" r="1.7" fill="#fff" stroke="#27359b" stroke-width="1"/><rect x="38.6" y="51" width="2.6" height="3.6" fill="#f4d23c" rx="1"/><rect x="8" y="54.7" width="3.8" height="0.65" fill="#8a8a8a"/><rect x="12.5" y="54.7" width="2.09" height="0.65" fill="#8a8a8a"/><rect x="15.28" y="54.7" width="3.64" height="0.65" fill="#8a8a8a"/><rect x="19.62" y="54.7" width="3.67" height="0.65" fill="#8a8a8a"/><rect x="23.99" y="54.7" width="2.62" height="0.65" fill="#8a8a8a"/><rect x="27.31" y="54.7" width="3.34" height="0.65" fill="#8a8a8a"/><rect x="31.35" y="54.7" width="2.65" height="0.65" fill="#8a8a8a"/><rect x="4" y="56.3" width="3.61" height="0.65" fill="#8a8a8a"/><rect x="8.31" y="56.3" width="2.55" height="0.65" fill="#8a8a8a"/><rect x="11.56" y="56.3" width="3.78" height="0.65" fill="#8a8a8a"/><rect x="16.04" y="56.3" width="2.0" height="0.65" fill="#8a8a8a"/><rect x="18.74" y="56.3" width="3.92" height="0.65" fill="#8a8a8a"/><rect x="23.36" y="56.3" width="3.36" height="0.65" fill="#8a8a8a"/><rect x="27.42" y="56.3" width="3.39" height="0.65" fill="#8a8a8a"/><rect x="31.51" y="56.3" width="3.49" height="0.65" fill="#8a8a8a"/><rect x="3" y="58.2" width="1.67" height="0.65" fill="#9a9a9a"/><rect x="5.37" y="58.2" width="4.06" height="0.65" fill="#9a9a9a"/><rect x="10.13" y="58.2" width="3.7" height="0.65" fill="#9a9a9a"/><rect x="14.53" y="58.2" width="4.12" height="0.65" fill="#9a9a9a"/><rect x="19.35" y="58.2" width="4.08" height="0.65" fill="#9a9a9a"/><rect x="24.13" y="58.2" width="3.62" height="0.65" fill="#9a9a9a"/><rect x="28.45" y="58.2" width="1.66" height="0.65" fill="#9a9a9a"/><rect x="30.81" y="58.2" width="2.24" height="0.65" fill="#9a9a9a"/><rect x="33.74" y="58.2" width="1.6" height="0.65" fill="#9a9a9a"/><rect x="1" y="59.9" width="36" height="0.35" fill="#ccc"/><rect x="1" y="52" width="0.35" height="8" fill="#ccc"/></svg></div>
<div class="abtn" style="left:1768px;top:904.50px;width:33px;background:#3ec9d6"></div>
<i class="ic" style="left:1777.65px;top:913.80px"><svg width="14" height="14" viewBox="0 0 24 24" fill="none" stroke="#fff" stroke-width="2.1" stroke-linecap="round" stroke-linejoin="round"><path d="M4 20h4l10.5 -10.5a1.5 1.5 0 0 0 -4 -4l-10.5 10.5v4 M13.5 6.5l4 4"/></svg></i>
<div class="abtn" style="left:1809px;top:904.50px;width:32px;background:#ff3a6e"></div>
<i class="ic" style="left:1818.00px;top:913.50px"><svg width="14" height="14" viewBox="0 0 24 24" fill="none" stroke="#fff" stroke-width="2.1" stroke-linecap="round" stroke-linejoin="round"><path d="M4 7l16 0 M10 11l0 6 M14 11l0 6 M5 7l1 12a2 2 0 0 0 2 2h8a2 2 0 0 0 2 -2l1 -12 M9 7v-3a1 1 0 0 1 1 -1h4a1 1 0 0 1 1 1v3"/></svg></i>
<div class="rb" style="top:1075.80px"></div>
<span class="x " style="left:335.00px;top:1015.15px;font-size:14px;letter-spacing:0.219px;color:#293240;">7</span>
<span class="x " style="left:397.00px;top:1015.15px;font-size:14px;letter-spacing:0.945px;color:#293240;">Midterm</span>
<span class="x " style="left:589.00px;top:1015.15px;font-size:14px;letter-spacing:-0.484px;color:#293240;">A</span>
<span class="x " style="left:699.00px;top:1015.15px;font-size:14px;letter-spacing:-0.260px;color:#293240;">Class 1</span>
<span class="x " style="left:854.00px;top:1015.15px;font-size:14px;letter-spacing:0.438px;color:#293240;">18</span>
<span class="x " style="left:1037.00px;top:1015.15px;font-size:14px;letter-spacing:0.438px;color:#293240;">50</span>
<span class="x " style="left:1204.00px;top:1015.15px;font-size:14px;letter-spacing:0.160px;color:#293240;">14-03-2024</span>
<span class="x " style="left:1402.00px;top:1015.15px;font-size:14px;letter-spacing:0.160px;color:#293240;">21-03-2024</span>
<div class="thumb" style="top:984.40px"><svg width="76" height="76" viewBox="0 0 76 76"><rect x="6.2" y="0" width="62.8" height="76" fill="#efefef"/><rect x="12.6" y="2.1" width="49.9" height="69.4" fill="#fff" stroke="#b0b0b0" stroke-width=".5"/><rect x="12.6" y="2.0" width="49.9" height="0.8" fill="#555"/><rect x="16.8" y="3.9" width="3.2" height="1.1" fill="#e8952c"/><rect x="23.3" y="4.7" width="3.3" height="0.9" fill="#c6c6c6"/><rect x="27.3" y="4.7" width="2.59" height="0.9" fill="#c6c6c6"/><rect x="30.59" y="4.7" width="2.5" height="0.9" fill="#c6c6c6"/><rect x="33.79" y="4.7" width="1.94" height="0.9" fill="#c6c6c6"/><rect x="36.43" y="4.7" width="2.53" height="0.9" fill="#c6c6c6"/><rect x="39.66" y="4.7" width="3.48" height="0.9" fill="#c6c6c6"/><rect x="43.84" y="4.7" width="3.75" height="0.9" fill="#c6c6c6"/><rect x="48.29" y="4.7" width="2.81" height="0.9" fill="#c6c6c6"/><rect x="34.3" y="7" width="6.2" height="0.9" fill="#555"/><rect x="16.4" y="10" width="3.53" height="0.95" fill="#3a3a3a"/><rect x="20.63" y="10" width="3.69" height="0.95" fill="#3a3a3a"/><rect x="25.03" y="10" width="2.07" height="0.95" fill="#3a3a3a"/><rect x="27.8" y="10" width="1.68" height="0.95" fill="#3a3a3a"/><rect x="30.17" y="10" width="2.44" height="0.95" fill="#3a3a3a"/><rect x="33.31" y="10" width="1.78" height="0.95" fill="#3a3a3a"/><rect x="35.8" y="10" width="2.59" height="0.95" fill="#3a3a3a"/><rect x="39.09" y="10" width="4.18" height="0.95" fill="#3a3a3a"/><rect x="43.97" y="10" width="3.02" height="0.95" fill="#3a3a3a"/><rect x="47.69" y="10" width="1.87" height="0.95" fill="#3a3a3a"/><rect x="50.26" y="10" width="3.67" height="0.95" fill="#3a3a3a"/><rect x="16.4" y="12.1" width="2.1" height="0.95" fill="#3a3a3a"/><rect x="19.2" y="12.1" width="3.67" height="0.95" fill="#3a3a3a"/><rect x="23.57" y="12.1" width="2.05" height="0.95" fill="#3a3a3a"/><rect x="26.32" y="12.1" width="3.79" height="0.95" fill="#3a3a3a"/><rect x="30.81" y="12.1" width="2.38" height="0.95" fill="#3a3a3a"/><rect x="33.88" y="12.1" width="1.65" height="0.95" fill="#3a3a3a"/><rect x="36.24" y="12.1" width="3.68" height="0.95" fill="#3a3a3a"/><rect x="40.62" y="12.1" width="2.28" height="0.95" fill="#3a3a3a"/><rect x="43.6" y="12.1" width="2.45" height="0.95" fill="#3a3a3a"/><rect x="46.75" y="12.1" width="2.32" height="0.95" fill="#3a3a3a"/><rect x="49.77" y="12.1" width="3.97" height="0.95" fill="#3a3a3a"/><rect x="16.4" y="14.2" width="0.9" height="0.9" fill="#333"/><rect x="18" y="14.6" width="7.5" height="0.6" fill="#444"/><rect x="26.2" y="14.1" width="1.83" height="1.1" fill="#333"/><rect x="28.73" y="14.1" width="3.53" height="1.1" fill="#333"/><rect x="32.97" y="14.1" width="1.91" height="1.1" fill="#333"/><rect x="35.58" y="14.1" width="2.76" height="1.1" fill="#333"/><rect x="39.04" y="14.1" width="3.9" height="1.1" fill="#333"/><rect x="43.64" y="14.1" width="3.77" height="1.1" fill="#333"/><rect x="48.11" y="14.1" width="1.94" height="1.1" fill="#333"/><rect x="21.3" y="17.6" width="0.45" height="4.2" fill="#666"/><rect x="23" y="17.7" width="4.5" height="0.8" fill="#555"/><rect x="23" y="19.1" width="5" height="0.8" fill="#555"/><rect x="23" y="20.5" width="7.5" height="0.8" fill="#555"/><rect x="16.4" y="23.7" width="4.04" height="1.15" fill="#2b2b2b"/><rect x="20.99" y="23.7" width="2.58" height="1.15" fill="#2b2b2b"/><rect x="24.12" y="23.7" width="3.26" height="1.15" fill="#2b2b2b"/><rect x="27.92" y="23.7" width="2.66" height="1.15" fill="#2b2b2b"/><rect x="31.14" y="23.7" width="1.73" height="1.15" fill="#2b2b2b"/><rect x="33.41" y="23.7" width="1.75" height="1.15" fill="#2b2b2b"/><rect x="35.71" y="23.7" width="1.72" height="1.15" fill="#2b2b2b"/><rect x="37.98" y="23.7" width="2.74" height="1.15" fill="#2b2b2b"/><rect x="41.27" y="23.7" width="2.89" height="1.15" fill="#2b2b2b"/><rect x="44.7" y="23.7" width="3.83" height="1.15" fill="#2b2b2b"/><rect x="49.08" y="23.7" width="2.7" height="1.15" fill="#2b2b2b"/><rect x="52.33" y="23.7" width="1.84" height="1.15" fill="#2b2b2b"/><rect x="54.71" y="23.7" width="0.69" height="1.15" fill="#2b2b2b"/><rect x="16.4" y="25.0" width="2.86" height="1.15" fill="#2b2b2b"/><rect x="19.81" y="25.0" width="2.48" height="1.15" fill="#2b2b2b"/><rect x="22.85" y="25.0" width="2.08" height="1.15" fill="#2b2b2b"/><rect x="25.47" y="25.0" width="1.97" height="1.15" fill="#2b2b2b"/><rect x="27.99" y="25.0" width="2.93" height="1.15" fill="#2b2b2b"/><rect x="31.47" y="25.0" width="3.51" height="1.15" fill="#2b2b2b"/><rect x="35.53" y="25.0" width="2.59" height="1.15" fill="#2b2b2b"/><rect x="38.67" y="25.0" width="3.98" height="1.15" fill="#2b2b2b"/><rect x="43.2" y="25.0" width="3.7" height="1.15" fill="#2b2b2b"/><rect x="47.45" y="25.0" width="2.0" height="1.15" fill="#2b2b2b"/><rect x="50.0" y="25.0" width="3.74" height="1.15" fill="#2b2b2b"/><rect x="54.3" y="25.0" width="0.6" height="1.15" fill="#2b2b2b"/><rect x="16.4" y="26.9" width="2.74" height="0.8" fill="#6a6a6a"/><rect x="19.84" y="26.9" width="2.48" height="0.8" fill="#6a6a6a"/><rect x="23.02" y="26.9" width="2.34" height="0.8" fill="#6a6a6a"/><rect x="26.05" y="26.9" width="2.33" height="0.8" fill="#6a6a6a"/><rect x="29.08" y="26.9" width="3.07" height="0.8" fill="#6a6a6a"/><rect x="32.85" y="26.9" width="3.79" height="0.8" fill="#6a6a6a"/><rect x="37.34" y="26.9" width="2.24" height="0.8" fill="#6a6a6a"/><rect x="40.28" y="26.9" width="4.03" height="0.8" fill="#6a6a6a"/><rect x="16.4" y="29.1" width="0.9" height="0.9" fill="#333"/><rect x="18" y="29.1" width="2.95" height="0.9" fill="#3a3a3a"/><rect x="21.65" y="29.1" width="4.01" height="0.9" fill="#3a3a3a"/><rect x="26.35" y="29.1" width="1.05" height="0.9" fill="#3a3a3a"/><rect x="21.3" y="31.6" width="0.45" height="4.2" fill="#666"/><rect x="23" y="31.7" width="8.5" height="0.8" fill="#555"/><rect x="23" y="33.1" width="6.5" height="0.8" fill="#555"/><rect x="23" y="34.6" width="9" height="0.8" fill="#555"/><rect x="20.5" y="34.1" width="18.5" height="8.8" fill="#c3f0bf" rx="1.6"/><rect x="39.8" y="36.2" width="13" height="5.9" fill="#abd5f5" rx="1.6"/><rect x="16.4" y="37.3" width="3.54" height="1.1" fill="#383838"/><rect x="20.49" y="37.3" width="3.04" height="1.1" fill="#383838"/><rect x="24.09" y="37.3" width="2.7" height="1.1" fill="#383838"/><rect x="27.34" y="37.3" width="1.84" height="1.1" fill="#383838"/><rect x="29.73" y="37.3" width="2.77" height="1.1" fill="#383838"/><rect x="33.05" y="37.3" width="2.81" height="1.1" fill="#383838"/><rect x="36.41" y="37.3" width="3.71" height="1.1" fill="#383838"/><rect x="40.68" y="37.3" width="1.65" height="1.1" fill="#383838"/><rect x="42.87" y="37.3" width="2.14" height="1.1" fill="#383838"/><rect x="45.56" y="37.3" width="3.08" height="1.1" fill="#383838"/><rect x="49.19" y="37.3" width="2.14" height="1.1" fill="#383838"/><rect x="51.89" y="37.3" width="2.76" height="1.1" fill="#383838"/><rect x="55.2" y="37.3" width="2.55" height="1.1" fill="#383838"/><rect x="16.4" y="39.2" width="2.22" height="1.1" fill="#383838"/><rect x="19.17" y="39.2" width="2.88" height="1.1" fill="#383838"/><rect x="22.59" y="39.2" width="3.83" height="1.1" fill="#383838"/><rect x="26.97" y="39.2" width="3.63" height="1.1" fill="#383838"/><rect x="31.15" y="39.2" width="2.88" height="1.1" fill="#383838"/><rect x="34.59" y="39.2" width="2.36" height="1.1" fill="#383838"/><rect x="37.5" y="39.2" width="1.9" height="1.1" fill="#383838"/><rect x="41" y="38.7" width="1.99" height="0.9" fill="#eaf4fc"/><rect x="43.69" y="38.7" width="3.76" height="0.9" fill="#eaf4fc"/><rect x="48.15" y="38.7" width="1.76" height="0.9" fill="#eaf4fc"/><rect x="16.4" y="42.2" width="7.3" height="0.6" fill="#999"/><rect x="21.3" y="44.1" width="0.45" height="4.2" fill="#666"/><rect x="23" y="44.2" width="2.5" height="0.8" fill="#555"/><rect x="23" y="45.6" width="3.4" height="0.8" fill="#555"/><rect x="23" y="47" width="4" height="0.8" fill="#555"/><rect x="16.4" y="49.8" width="2.83" height="1.05" fill="#303030"/><rect x="19.93" y="49.8" width="2.53" height="1.05" fill="#303030"/><rect x="23.16" y="49.8" width="3.66" height="1.05" fill="#303030"/><rect x="27.52" y="49.8" width="3.99" height="1.05" fill="#303030"/><rect x="32.21" y="49.8" width="1.89" height="1.05" fill="#303030"/><rect x="34.81" y="49.8" width="2.3" height="1.05" fill="#303030"/><rect x="37.81" y="49.8" width="2.77" height="1.05" fill="#303030"/><rect x="41.28" y="49.8" width="3.0" height="1.05" fill="#303030"/><rect x="44.99" y="49.8" width="2.43" height="1.05" fill="#303030"/><rect x="48.12" y="49.8" width="4.17" height="1.05" fill="#303030"/><rect x="52.99" y="49.8" width="2.01" height="1.05" fill="#303030"/><rect x="16.4" y="52.1" width="3.3" height="0.45" fill="#b5b5b5"/><rect x="16.4" y="54.1" width="0.9" height="0.9" fill="#333"/><rect x="18" y="54.1" width="3.53" height="0.9" fill="#3a3a3a"/><rect x="22.23" y="54.1" width="2.63" height="0.9" fill="#3a3a3a"/><rect x="21.3" y="56.3" width="0.45" height="4.6" fill="#666"/><rect x="23" y="56.4" width="4" height="0.8" fill="#555"/><rect x="23" y="58.1" width="6.8" height="0.8" fill="#555"/><rect x="23" y="59.8" width="6" height="0.8" fill="#555"/><rect x="16.4" y="70.1" width="4.19" height="0.8" fill="#5a5a5a"/><rect x="21.29" y="70.1" width="1.74" height="0.8" fill="#5a5a5a"/><rect x="23.73" y="70.1" width="1.74" height="0.8" fill="#5a5a5a"/><rect x="26.17" y="70.1" width="1.8" height="0.8" fill="#5a5a5a"/><rect x="28.67" y="70.1" width="2.03" height="0.8" fill="#5a5a5a"/><rect x="31.4" y="70.1" width="0.9" height="0.8" fill="#5a5a5a"/><rect x="60.5" y="70.2" width="0.6" height="0.6" fill="#999"/></svg></div>
<div class="abtn" style="left:1768px;top:1008.90px;width:33px;background:#3ec9d6"></div>
<i class="ic" style="left:1777.65px;top:1018.20px"><svg width="14" height="14" viewBox="0 0 24 24" fill="none" stroke="#fff" stroke-width="2.1" stroke-linecap="round" stroke-linejoin="round"><path d="M4 20h4l10.5 -10.5a1.5 1.5 0 0 0 -4 -4l-10.5 10.5v4 M13.5 6.5l4 4"/></svg></i>
<div class="abtn" style="left:1809px;top:1008.90px;width:32px;background:#ff3a6e"></div>
<i class="ic" style="left:1818.00px;top:1017.90px"><svg width="14" height="14" viewBox="0 0 24 24" fill="none" stroke="#fff" stroke-width="2.1" stroke-linecap="round" stroke-linejoin="round"><path d="M4 7l16 0 M10 11l0 6 M14 11l0 6 M5 7l1 12a2 2 0 0 0 2 2h8a2 2 0 0 0 2 -2l1 -12 M9 7v-3a1 1 0 0 1 1 -1h4a1 1 0 0 1 1 1v3"/></svg></i>
<div class="rb" style="top:1180.20px"></div>
<span class="x " style="left:335.00px;top:1119.15px;font-size:14px;letter-spacing:0.219px;color:#293240;">8</span>
<span class="x " style="left:397.00px;top:1119.15px;font-size:14px;letter-spacing:0.420px;color:#293240;">Unit tests</span>
<span class="x " style="left:589.00px;top:1119.15px;font-size:14px;letter-spacing:0.047px;color:#293240;">D</span>
<span class="x " style="left:699.00px;top:1119.15px;font-size:14px;letter-spacing:-0.260px;color:#293240;">Class 4</span>
<span class="x " style="left:854.00px;top:1119.15px;font-size:14px;letter-spacing:0.438px;color:#293240;">12</span>
<span class="x " style="left:1037.00px;top:1119.15px;font-size:14px;letter-spacing:0.438px;color:#293240;">40</span>
<span class="x " style="left:1204.00px;top:1119.15px;font-size:14px;letter-spacing:0.160px;color:#293240;">02-03-2024</span>
<span class="x " style="left:1402.00px;top:1119.15px;font-size:14px;letter-spacing:0.160px;color:#293240;">09-03-2024</span>
<div class="thumb" style="top:1088.80px"><svg width="76" height="76" viewBox="0 0 76 76"><linearGradient id="g7" x1="0" x2="1" y1="0" y2="0"><stop offset="0" stop-color="#b24fa4"/><stop offset="1" stop-color="#7989d1"/></linearGradient><rect x="12.1" y="0" width="51" height="8.8" fill="url(#g7)"/><rect x="25.8" y="3.1" width="3.23" height="2.8" fill="#f6ebf8"/><rect x="29.93" y="3.1" width="3.07" height="2.8" fill="#f6ebf8"/><rect x="33.9" y="3.1" width="2.91" height="2.8" fill="#f6ebf8"/><rect x="37.71" y="3.1" width="3.18" height="2.8" fill="#f6ebf8"/><rect x="41.79" y="3.1" width="3.21" height="2.8" fill="#f6ebf8"/><rect x="45.9" y="3.1" width="2.82" height="2.8" fill="#f6ebf8"/><rect x="21.3" y="11.9" width="7.77" height="2.5" fill="#3b8229"/><rect x="29.87" y="11.9" width="6.53" height="2.5" fill="#3b8229"/><rect x="37.2" y="11.9" width="7.96" height="2.5" fill="#3b8229"/><rect x="45.95" y="11.9" width="5.43" height="2.5" fill="#3b8229"/><rect x="52.18" y="11.9" width="2.82" height="2.5" fill="#3b8229"/><rect x="21.3" y="14.9" width="33.7" height="0.55" fill="#3b8229"/><rect x="15.6" y="18.7" width="3.34" height="0.9" fill="#8c8c8c"/><rect x="19.64" y="18.7" width="2.56" height="0.9" fill="#8c8c8c"/><rect x="22.9" y="18.7" width="3.61" height="0.9" fill="#8c8c8c"/><rect x="27.21" y="18.7" width="3.63" height="0.9" fill="#8c8c8c"/><rect x="31.54" y="18.7" width="2.77" height="0.9" fill="#8c8c8c"/><rect x="35.01" y="18.7" width="2.44" height="0.9" fill="#8c8c8c"/><rect x="38.15" y="18.7" width="3.07" height="0.9" fill="#8c8c8c"/><rect x="41.92" y="18.7" width="3.74" height="0.9" fill="#8c8c8c"/><rect x="46.36" y="18.7" width="3.17" height="0.9" fill="#8c8c8c"/><rect x="50.24" y="18.7" width="3.61" height="0.9" fill="#8c8c8c"/><rect x="15.6" y="22.3" width="2.1" height="0.75" fill="#a8a8a8"/><rect x="18.4" y="22.3" width="1.75" height="0.75" fill="#a8a8a8"/><rect x="20.84" y="22.3" width="2.34" height="0.75" fill="#a8a8a8"/><rect x="23.88" y="22.3" width="3.41" height="0.75" fill="#a8a8a8"/><rect x="27.99" y="22.3" width="3.37" height="0.75" fill="#a8a8a8"/><rect x="32.06" y="22.3" width="1.62" height="0.75" fill="#a8a8a8"/><rect x="34.37" y="22.3" width="2.27" height="0.75" fill="#a8a8a8"/><rect x="37.34" y="22.3" width="4.05" height="0.75" fill="#a8a8a8"/><rect x="42.09" y="22.3" width="1.7" height="0.75" fill="#a8a8a8"/><rect x="44.49" y="22.3" width="2.24" height="0.75" fill="#a8a8a8"/><rect x="47.43" y="22.3" width="3.2" height="0.75" fill="#a8a8a8"/><rect x="15.6" y="24.1" width="2.57" height="0.75" fill="#a8a8a8"/><rect x="18.87" y="24.1" width="2.16" height="0.75" fill="#a8a8a8"/><rect x="21.73" y="24.1" width="1.63" height="0.75" fill="#a8a8a8"/><rect x="24.06" y="24.1" width="1.84" height="0.75" fill="#a8a8a8"/><rect x="26.6" y="24.1" width="3.86" height="0.75" fill="#a8a8a8"/><rect x="31.16" y="24.1" width="2.95" height="0.75" fill="#a8a8a8"/><rect x="34.81" y="24.1" width="3.04" height="0.75" fill="#a8a8a8"/><rect x="38.55" y="24.1" width="2.76" height="0.75" fill="#a8a8a8"/><rect x="42.01" y="24.1" width="2.65" height="0.75" fill="#a8a8a8"/><rect x="45.36" y="24.1" width="3.25" height="0.75" fill="#a8a8a8"/><rect x="49.31" y="24.1" width="1.95" height="0.75" fill="#a8a8a8"/><rect x="51.95" y="24.1" width="4.11" height="0.75" fill="#a8a8a8"/><rect x="15.6" y="26.1" width="3.33" height="0.75" fill="#a8a8a8"/><rect x="19.63" y="26.1" width="1.68" height="0.75" fill="#a8a8a8"/><rect x="22.0" y="26.1" width="4.14" height="0.75" fill="#a8a8a8"/><rect x="26.84" y="26.1" width="2.73" height="0.75" fill="#a8a8a8"/><rect x="30.27" y="26.1" width="2.64" height="0.75" fill="#a8a8a8"/><rect x="33.61" y="26.1" width="3.99" height="0.75" fill="#a8a8a8"/><rect x="38.3" y="26.1" width="1.64" height="0.75" fill="#a8a8a8"/><rect x="40.64" y="26.1" width="3.3" height="0.75" fill="#a8a8a8"/><rect x="44.63" y="26.1" width="1.72" height="0.75" fill="#a8a8a8"/><rect x="47.06" y="26.1" width="2.97" height="0.75" fill="#a8a8a8"/><rect x="50.73" y="26.1" width="3.63" height="0.75" fill="#a8a8a8"/><rect x="15.6" y="27.9" width="3.89" height="0.75" fill="#a8a8a8"/><rect x="20.19" y="27.9" width="3.47" height="0.75" fill="#a8a8a8"/><rect x="24.36" y="27.9" width="3.87" height="0.75" fill="#a8a8a8"/><rect x="28.93" y="27.9" width="2.38" height="0.75" fill="#a8a8a8"/><rect x="32.0" y="27.9" width="2.25" height="0.75" fill="#a8a8a8"/><rect x="34.95" y="27.9" width="2.13" height="0.75" fill="#a8a8a8"/><rect x="37.79" y="27.9" width="3.61" height="0.75" fill="#a8a8a8"/><rect x="42.09" y="27.9" width="2.39" height="0.75" fill="#a8a8a8"/><rect x="45.18" y="27.9" width="3.05" height="0.75" fill="#a8a8a8"/><rect x="48.93" y="27.9" width="4.2" height="0.75" fill="#a8a8a8"/><rect x="53.82" y="27.9" width="2.4" height="0.75" fill="#a8a8a8"/><rect x="56.93" y="27.9" width="2.27" height="0.75" fill="#a8a8a8"/><rect x="15.6" y="31.8" width="2.76" height="0.95" fill="#6e6e6e"/><rect x="19.06" y="31.8" width="1.65" height="0.95" fill="#6e6e6e"/><rect x="21.41" y="31.8" width="2.8" height="0.95" fill="#6e6e6e"/><rect x="24.9" y="31.8" width="2.03" height="0.95" fill="#6e6e6e"/><rect x="27.63" y="31.8" width="2.7" height="0.95" fill="#6e6e6e"/><rect x="31.03" y="31.8" width="1.78" height="0.95" fill="#6e6e6e"/><rect x="33.51" y="31.8" width="1.9" height="0.95" fill="#6e6e6e"/><rect x="36.11" y="31.8" width="1.78" height="0.95" fill="#6e6e6e"/><rect x="38.58" y="31.8" width="3.38" height="0.95" fill="#6e6e6e"/><rect x="42.67" y="31.8" width="3.32" height="0.95" fill="#6e6e6e"/><rect x="46.69" y="31.8" width="2.14" height="0.95" fill="#6e6e6e"/><rect x="49.52" y="31.8" width="3.77" height="0.95" fill="#6e6e6e"/><rect x="53.99" y="31.8" width="2.19" height="0.95" fill="#6e6e6e"/><rect x="15.6" y="33.9" width="2.28" height="0.95" fill="#6e6e6e"/><rect x="18.58" y="33.9" width="2.04" height="0.95" fill="#6e6e6e"/><rect x="21.32" y="33.9" width="3.67" height="0.95" fill="#6e6e6e"/><rect x="25.69" y="33.9" width="2.09" height="0.95" fill="#6e6e6e"/><rect x="28.48" y="33.9" width="3.15" height="0.95" fill="#6e6e6e"/><rect x="32.32" y="33.9" width="2.71" height="0.95" fill="#6e6e6e"/><rect x="35.73" y="33.9" width="3.13" height="0.95" fill="#6e6e6e"/><rect x="39.55" y="33.9" width="4.06" height="0.95" fill="#6e6e6e"/><rect x="44.31" y="33.9" width="1.77" height="0.95" fill="#6e6e6e"/><rect x="46.78" y="33.9" width="2.02" height="0.95" fill="#6e6e6e"/><rect x="49.5" y="33.9" width="2.41" height="0.95" fill="#6e6e6e"/><rect x="52.62" y="33.9" width="1.58" height="0.95" fill="#6e6e6e"/><rect x="15.6" y="36.2" width="3.97" height="0.85" fill="#909090"/><rect x="20.27" y="36.2" width="1.78" height="0.85" fill="#909090"/><rect x="22.75" y="36.2" width="3.74" height="0.85" fill="#909090"/><rect x="15.6" y="38.6" width="2.0" height="0.85" fill="#909090"/><rect x="18.3" y="38.6" width="2.04" height="0.85" fill="#909090"/><rect x="21.04" y="38.6" width="2.34" height="0.85" fill="#909090"/><rect x="24.08" y="38.6" width="3.97" height="0.85" fill="#909090"/><rect x="28.75" y="38.6" width="1.68" height="0.85" fill="#909090"/><rect x="31.12" y="38.6" width="1.77" height="0.85" fill="#909090"/><rect x="33.59" y="38.6" width="2.28" height="0.85" fill="#909090"/><rect x="36.57" y="38.6" width="3.6" height="0.85" fill="#909090"/><rect x="40.87" y="38.6" width="2.16" height="0.85" fill="#909090"/><rect x="43.73" y="38.6" width="3.92" height="0.85" fill="#909090"/><rect x="48.34" y="38.6" width="3.6" height="0.85" fill="#909090"/><rect x="52.65" y="38.6" width="2.95" height="0.85" fill="#909090"/><rect x="15.6" y="40.8" width="2.09" height="0.85" fill="#909090"/><rect x="18.39" y="40.8" width="4.18" height="0.85" fill="#909090"/><rect x="23.27" y="40.8" width="3.6" height="0.85" fill="#909090"/><rect x="27.58" y="40.8" width="3.02" height="0.85" fill="#909090"/><rect x="31.3" y="40.8" width="2.62" height="0.85" fill="#909090"/><rect x="34.61" y="40.8" width="1.99" height="0.85" fill="#909090"/><rect x="15.6" y="43" width="2.49" height="0.75" fill="#8c8c8c"/><rect x="18.79" y="43" width="2.25" height="0.75" fill="#8c8c8c"/><rect x="21.74" y="43" width="2.73" height="0.75" fill="#8c8c8c"/><rect x="25.17" y="43" width="3.08" height="0.75" fill="#8c8c8c"/><rect x="28.95" y="43" width="2.67" height="0.75" fill="#8c8c8c"/><rect x="32.31" y="43" width="3.24" height="0.75" fill="#8c8c8c"/><rect x="36.25" y="43" width="3.65" height="0.75" fill="#8c8c8c"/><rect x="40.6" y="43" width="3.35" height="0.75" fill="#8c8c8c"/><rect x="44.66" y="43" width="2.93" height="0.75" fill="#8c8c8c"/><rect x="48.29" y="43" width="1.81" height="0.75" fill="#8c8c8c"/><rect x="15.6" y="45.4" width="3.94" height="1.05" fill="#6e6e6e"/><rect x="20.24" y="45.4" width="2.86" height="1.05" fill="#6e6e6e"/><rect x="23.8" y="45.4" width="2.28" height="1.05" fill="#6e6e6e"/><rect x="26.78" y="45.4" width="3.35" height="1.05" fill="#6e6e6e"/><rect x="30.83" y="45.4" width="2.14" height="1.05" fill="#6e6e6e"/><rect x="33.67" y="45.4" width="2.86" height="1.05" fill="#6e6e6e"/><rect x="37.23" y="45.4" width="3.62" height="1.05" fill="#6e6e6e"/><rect x="41.55" y="45.4" width="2.48" height="1.05" fill="#6e6e6e"/><rect x="44.73" y="45.4" width="1.72" height="1.05" fill="#6e6e6e"/><rect x="47.15" y="45.4" width="2.81" height="1.05" fill="#6e6e6e"/><rect x="50.67" y="45.4" width="3.69" height="1.05" fill="#6e6e6e"/><rect x="55.05" y="45.4" width="3.39" height="1.05" fill="#6e6e6e"/><rect x="15.6" y="47.6" width="3.85" height="0.55" fill="#b8b8b8"/><rect x="20.15" y="47.6" width="3.84" height="0.55" fill="#b8b8b8"/><rect x="24.69" y="47.6" width="3.34" height="0.55" fill="#b8b8b8"/><rect x="28.73" y="47.6" width="2.87" height="0.55" fill="#b8b8b8"/><rect x="15.6" y="49.9" width="3.67" height="0.85" fill="#858585"/><rect x="19.97" y="49.9" width="3.89" height="0.85" fill="#858585"/><rect x="24.56" y="49.9" width="3.97" height="0.85" fill="#858585"/><rect x="29.23" y="49.9" width="3.29" height="0.85" fill="#858585"/><rect x="33.22" y="49.9" width="4.12" height="0.85" fill="#858585"/><rect x="38.03" y="49.9" width="3.22" height="0.85" fill="#858585"/><rect x="41.96" y="49.9" width="3.37" height="0.85" fill="#858585"/><rect x="46.03" y="49.9" width="2.38" height="0.85" fill="#858585"/><rect x="49.12" y="49.9" width="3.1" height="0.85" fill="#858585"/><rect x="52.91" y="49.9" width="0.89" height="0.85" fill="#858585"/><rect x="15.6" y="52.1" width="7" height="0.65" fill="#9c9c9c"/><rect x="21.7" y="56.8" width="5.89" height="1.7" fill="#2c50d6"/><rect x="28.29" y="56.8" width="4.64" height="1.7" fill="#2c50d6"/><rect x="33.64" y="56.8" width="3.74" height="1.7" fill="#2c50d6"/><rect x="38.08" y="56.8" width="5.37" height="1.7" fill="#2c50d6"/><rect x="44.15" y="56.8" width="3.38" height="1.7" fill="#2c50d6"/><rect x="48.23" y="56.8" width="3.03" height="1.7" fill="#2c50d6"/><rect x="51.96" y="56.8" width="1.94" height="1.7" fill="#2c50d6"/><rect x="21.7" y="59" width="32.2" height="0.5" fill="#2c50d6"/><rect x="12.1" y="68" width="51" height="5" fill="#7b8ccf"/><rect x="17.2" y="69.8" width="7.78" height="1.8" fill="#f0f2fb"/><rect x="25.68" y="69.8" width="4.95" height="1.8" fill="#f0f2fb"/><rect x="31.32" y="69.8" width="3.3" height="1.8" fill="#f0f2fb"/><rect x="35.33" y="69.8" width="7.98" height="1.8" fill="#f0f2fb"/><rect x="44.0" y="69.8" width="6.15" height="1.8" fill="#f0f2fb"/><rect x="50.85" y="69.8" width="6.23" height="1.8" fill="#f0f2fb"/></svg></div>
<div class="abtn" style="left:1768px;top:1113.30px;width:33px;background:#3ec9d6"></div>
<i class="ic" style="left:1777.65px;top:1122.60px"><svg width="14" height="14" viewBox="0 0 24 24" fill="none" stroke="#fff" stroke-width="2.1" stroke-linecap="round" stroke-linejoin="round"><path d="M4 20h4l10.5 -10.5a1.5 1.5 0 0 0 -4 -4l-10.5 10.5v4 M13.5 6.5l4 4"/></svg></i>
<div class="abtn" style="left:1809px;top:1113.30px;width:32px;background:#ff3a6e"></div>
<i class="ic" style="left:1818.00px;top:1122.30px"><svg width="14" height="14" viewBox="0 0 24 24" fill="none" stroke="#fff" stroke-width="2.1" stroke-linecap="round" stroke-linejoin="round"><path d="M4 7l16 0 M10 11l0 6 M14 11l0 6 M5 7l1 12a2 2 0 0 0 2 2h8a2 2 0 0 0 2 -2l1 -12 M9 7v-3a1 1 0 0 1 1 -1h4a1 1 0 0 1 1 1v3"/></svg></i>
</div>
</body>
</html>
